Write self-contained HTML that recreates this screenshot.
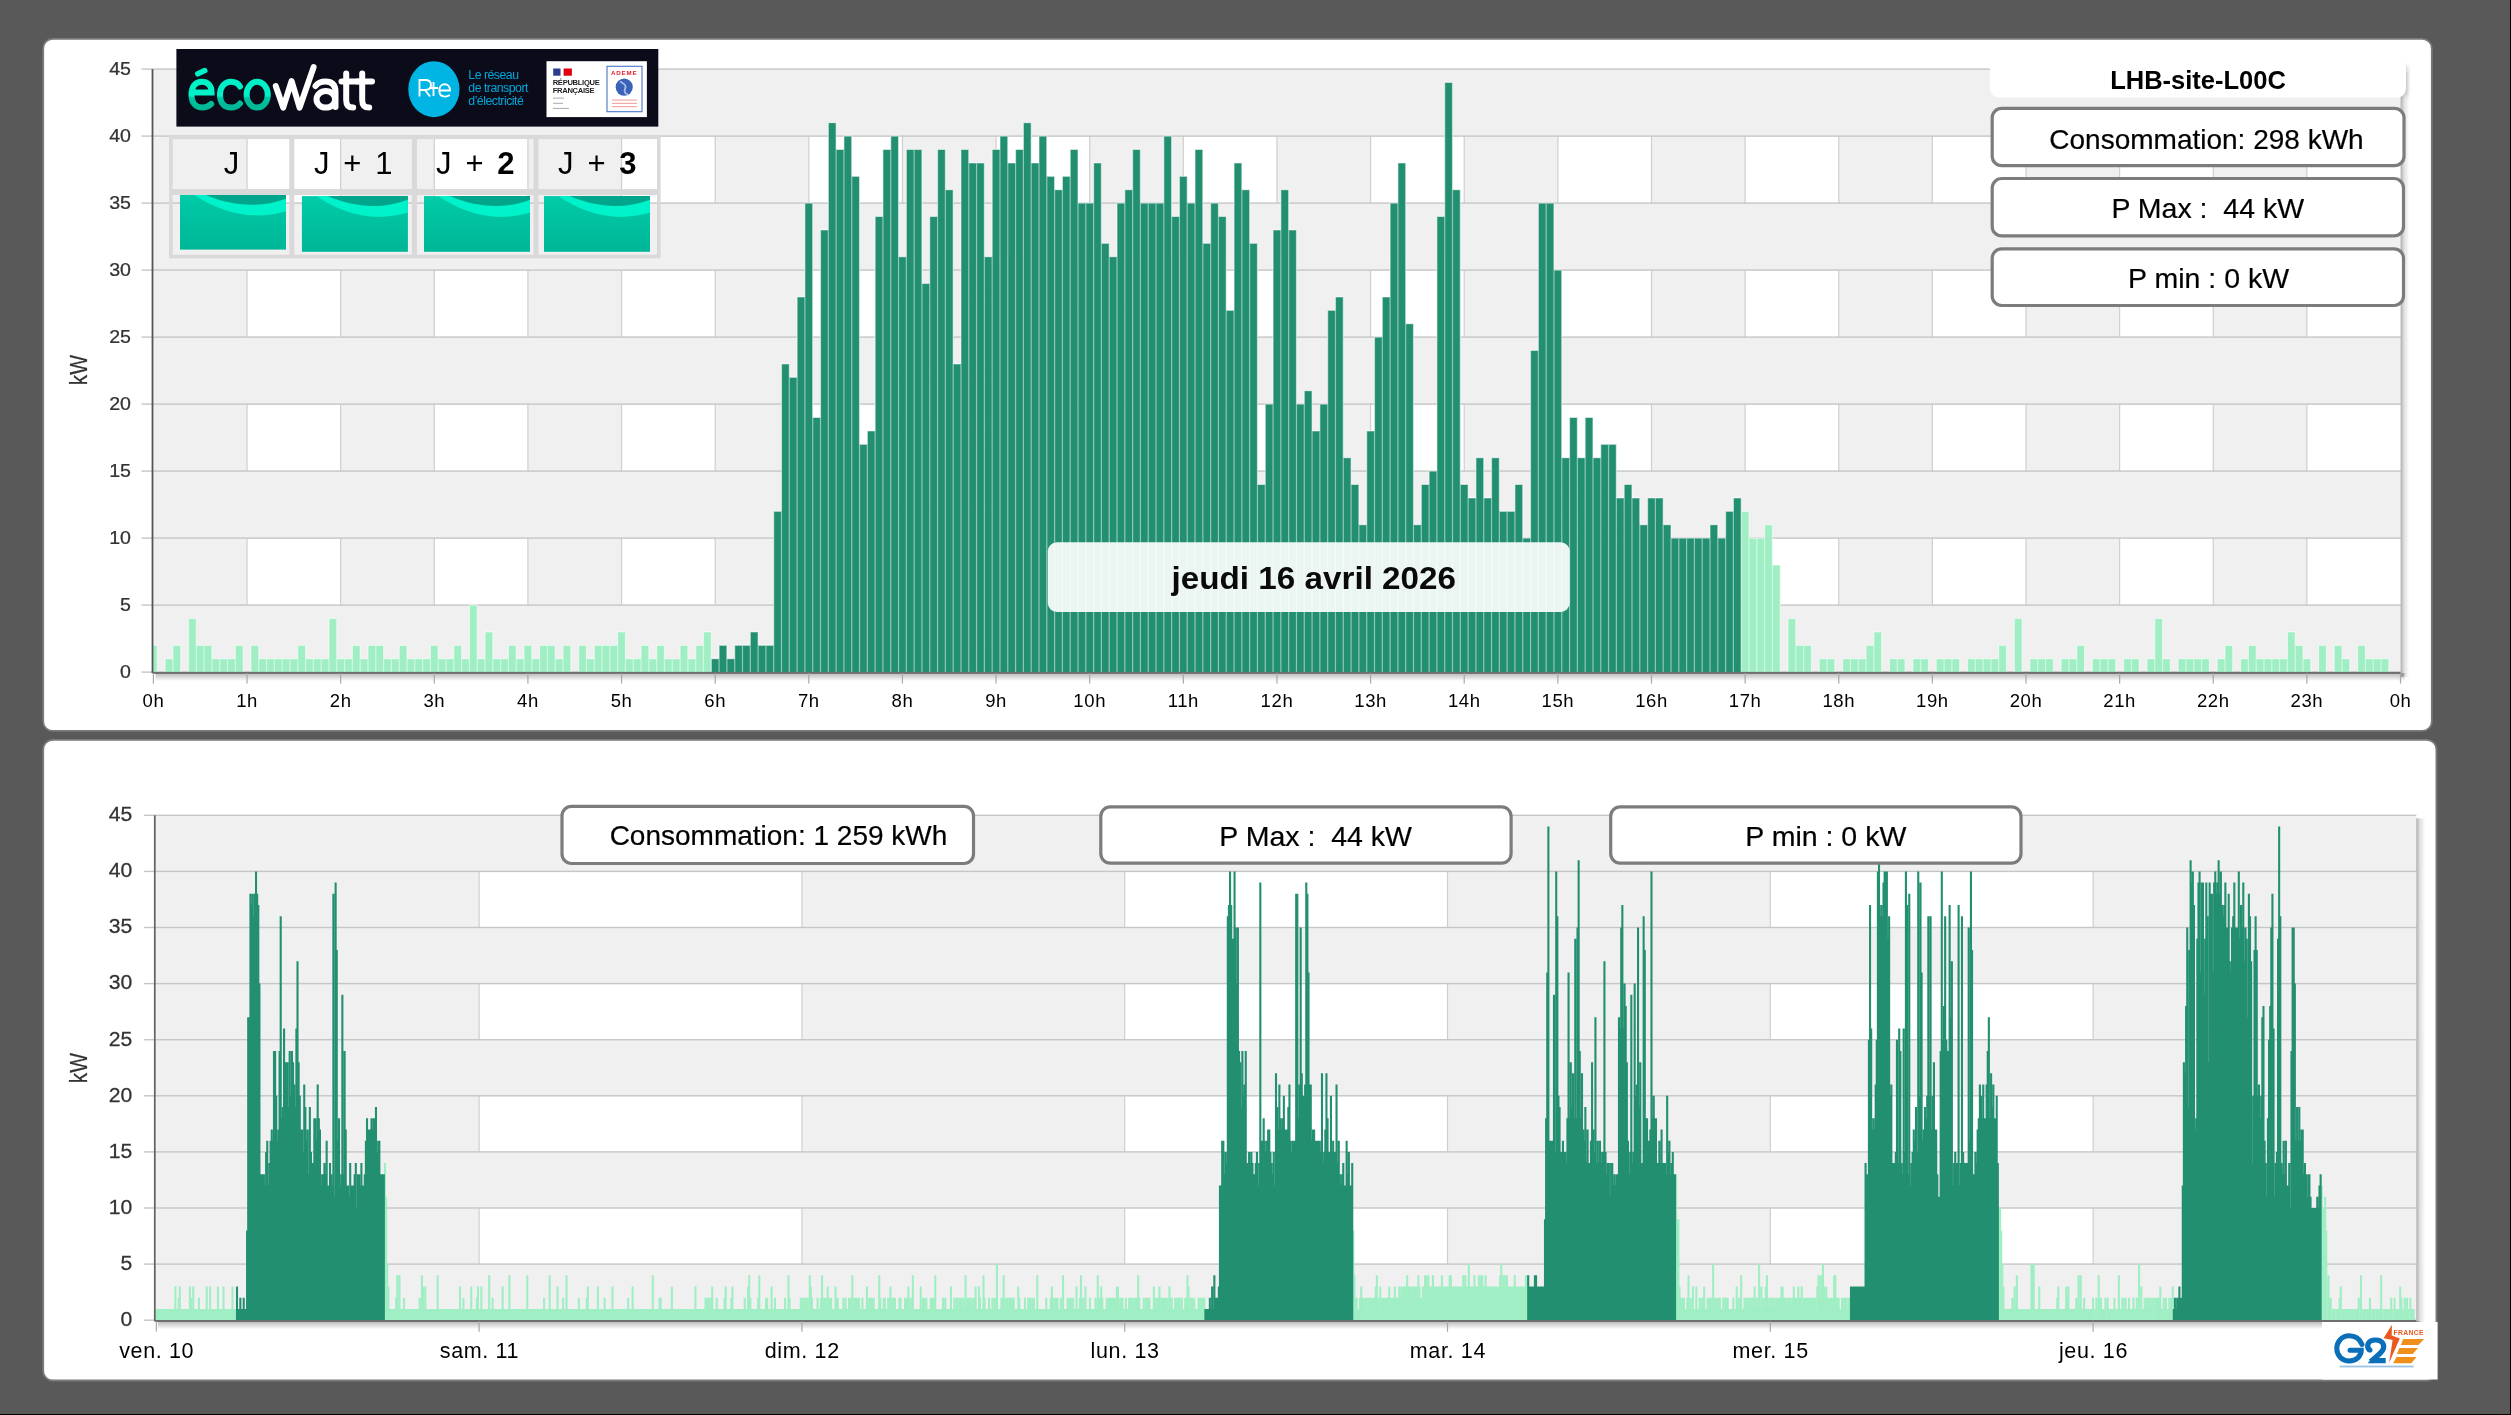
<!DOCTYPE html><html><head><meta charset="utf-8"><style>html,body{margin:0;padding:0;background:#595959;overflow:hidden}svg text{font-family:"Liberation Sans",sans-serif} svg{will-change:transform}</style></head><body><svg width="2511" height="1415" viewBox="0 0 2511 1415" style="display:block"><defs><linearGradient id="plotsh" x1="0" y1="0" x2="1" y2="0"><stop offset="0" stop-color="#000" stop-opacity="0.32"/><stop offset="0.4" stop-color="#000" stop-opacity="0.12"/><stop offset="1" stop-color="#000" stop-opacity="0"/></linearGradient><linearGradient id="plotshb" x1="0" y1="0" x2="0" y2="1"><stop offset="0" stop-color="#000" stop-opacity="0.28"/><stop offset="1" stop-color="#000" stop-opacity="0"/></linearGradient><linearGradient id="tile" x1="0" y1="0" x2="0" y2="1"><stop offset="0" stop-color="#00cba8"/><stop offset="1" stop-color="#00b696"/></linearGradient><linearGradient id="ecog" x1="0" y1="0" x2="0" y2="1"><stop offset="0.55" stop-color="#00f0c8"/><stop offset="0.62" stop-color="#00c4a0"/><stop offset="1" stop-color="#00b896"/></linearGradient><filter id="blur2" x="-3" y="-1" width="7" height="3"><feGaussianBlur stdDeviation="2.2"/></filter></defs><rect x="0" y="0" width="2511" height="1415" fill="#595959"/><rect x="2510" y="0" width="1" height="1415" fill="#000"/><rect x="0" y="1414" width="2511" height="1" fill="#000"/><rect x="43.2" y="38.9" width="2388.6" height="692" rx="9.5" fill="#fff" stroke="#7a7a7a" stroke-width="1.8"/><rect x="43.2" y="739.9" width="2393.2" height="640.6" rx="9.5" fill="#fff" stroke="#7a7a7a" stroke-width="1.8"/><rect x="152.5" y="69.1" width="2248.1" height="603" fill="#fff"/><rect x="152.5" y="69.1" width="2248.1" height="67" fill="#f0f0f0"/><rect x="153.4" y="136.1" width="93.63" height="67" fill="#f0f0f0"/><rect x="340.66" y="136.1" width="93.63" height="67" fill="#f0f0f0"/><rect x="527.92" y="136.1" width="93.63" height="67" fill="#f0f0f0"/><rect x="715.18" y="136.1" width="93.63" height="67" fill="#f0f0f0"/><rect x="902.44" y="136.1" width="93.63" height="67" fill="#f0f0f0"/><rect x="1089.7" y="136.1" width="93.63" height="67" fill="#f0f0f0"/><rect x="1276.96" y="136.1" width="93.63" height="67" fill="#f0f0f0"/><rect x="1464.22" y="136.1" width="93.63" height="67" fill="#f0f0f0"/><rect x="1651.48" y="136.1" width="93.63" height="67" fill="#f0f0f0"/><rect x="1838.74" y="136.1" width="93.63" height="67" fill="#f0f0f0"/><rect x="2026" y="136.1" width="93.63" height="67" fill="#f0f0f0"/><rect x="2213.26" y="136.1" width="93.63" height="67" fill="#f0f0f0"/><rect x="246.43" y="136.1" width="1.2" height="67" fill="#cfcfcf"/><rect x="340.06" y="136.1" width="1.2" height="67" fill="#cfcfcf"/><rect x="433.69" y="136.1" width="1.2" height="67" fill="#cfcfcf"/><rect x="527.32" y="136.1" width="1.2" height="67" fill="#cfcfcf"/><rect x="620.95" y="136.1" width="1.2" height="67" fill="#cfcfcf"/><rect x="714.58" y="136.1" width="1.2" height="67" fill="#cfcfcf"/><rect x="808.21" y="136.1" width="1.2" height="67" fill="#cfcfcf"/><rect x="901.84" y="136.1" width="1.2" height="67" fill="#cfcfcf"/><rect x="995.47" y="136.1" width="1.2" height="67" fill="#cfcfcf"/><rect x="1089.1" y="136.1" width="1.2" height="67" fill="#cfcfcf"/><rect x="1182.73" y="136.1" width="1.2" height="67" fill="#cfcfcf"/><rect x="1276.36" y="136.1" width="1.2" height="67" fill="#cfcfcf"/><rect x="1369.99" y="136.1" width="1.2" height="67" fill="#cfcfcf"/><rect x="1463.62" y="136.1" width="1.2" height="67" fill="#cfcfcf"/><rect x="1557.25" y="136.1" width="1.2" height="67" fill="#cfcfcf"/><rect x="1650.88" y="136.1" width="1.2" height="67" fill="#cfcfcf"/><rect x="1744.51" y="136.1" width="1.2" height="67" fill="#cfcfcf"/><rect x="1838.14" y="136.1" width="1.2" height="67" fill="#cfcfcf"/><rect x="1931.77" y="136.1" width="1.2" height="67" fill="#cfcfcf"/><rect x="2025.4" y="136.1" width="1.2" height="67" fill="#cfcfcf"/><rect x="2119.03" y="136.1" width="1.2" height="67" fill="#cfcfcf"/><rect x="2212.66" y="136.1" width="1.2" height="67" fill="#cfcfcf"/><rect x="2306.29" y="136.1" width="1.2" height="67" fill="#cfcfcf"/><rect x="152.5" y="203.1" width="2248.1" height="67" fill="#f0f0f0"/><rect x="153.4" y="270.1" width="93.63" height="67" fill="#f0f0f0"/><rect x="340.66" y="270.1" width="93.63" height="67" fill="#f0f0f0"/><rect x="527.92" y="270.1" width="93.63" height="67" fill="#f0f0f0"/><rect x="715.18" y="270.1" width="93.63" height="67" fill="#f0f0f0"/><rect x="902.44" y="270.1" width="93.63" height="67" fill="#f0f0f0"/><rect x="1089.7" y="270.1" width="93.63" height="67" fill="#f0f0f0"/><rect x="1276.96" y="270.1" width="93.63" height="67" fill="#f0f0f0"/><rect x="1464.22" y="270.1" width="93.63" height="67" fill="#f0f0f0"/><rect x="1651.48" y="270.1" width="93.63" height="67" fill="#f0f0f0"/><rect x="1838.74" y="270.1" width="93.63" height="67" fill="#f0f0f0"/><rect x="2026" y="270.1" width="93.63" height="67" fill="#f0f0f0"/><rect x="2213.26" y="270.1" width="93.63" height="67" fill="#f0f0f0"/><rect x="246.43" y="270.1" width="1.2" height="67" fill="#cfcfcf"/><rect x="340.06" y="270.1" width="1.2" height="67" fill="#cfcfcf"/><rect x="433.69" y="270.1" width="1.2" height="67" fill="#cfcfcf"/><rect x="527.32" y="270.1" width="1.2" height="67" fill="#cfcfcf"/><rect x="620.95" y="270.1" width="1.2" height="67" fill="#cfcfcf"/><rect x="714.58" y="270.1" width="1.2" height="67" fill="#cfcfcf"/><rect x="808.21" y="270.1" width="1.2" height="67" fill="#cfcfcf"/><rect x="901.84" y="270.1" width="1.2" height="67" fill="#cfcfcf"/><rect x="995.47" y="270.1" width="1.2" height="67" fill="#cfcfcf"/><rect x="1089.1" y="270.1" width="1.2" height="67" fill="#cfcfcf"/><rect x="1182.73" y="270.1" width="1.2" height="67" fill="#cfcfcf"/><rect x="1276.36" y="270.1" width="1.2" height="67" fill="#cfcfcf"/><rect x="1369.99" y="270.1" width="1.2" height="67" fill="#cfcfcf"/><rect x="1463.62" y="270.1" width="1.2" height="67" fill="#cfcfcf"/><rect x="1557.25" y="270.1" width="1.2" height="67" fill="#cfcfcf"/><rect x="1650.88" y="270.1" width="1.2" height="67" fill="#cfcfcf"/><rect x="1744.51" y="270.1" width="1.2" height="67" fill="#cfcfcf"/><rect x="1838.14" y="270.1" width="1.2" height="67" fill="#cfcfcf"/><rect x="1931.77" y="270.1" width="1.2" height="67" fill="#cfcfcf"/><rect x="2025.4" y="270.1" width="1.2" height="67" fill="#cfcfcf"/><rect x="2119.03" y="270.1" width="1.2" height="67" fill="#cfcfcf"/><rect x="2212.66" y="270.1" width="1.2" height="67" fill="#cfcfcf"/><rect x="2306.29" y="270.1" width="1.2" height="67" fill="#cfcfcf"/><rect x="152.5" y="337.1" width="2248.1" height="67" fill="#f0f0f0"/><rect x="153.4" y="404.1" width="93.63" height="67" fill="#f0f0f0"/><rect x="340.66" y="404.1" width="93.63" height="67" fill="#f0f0f0"/><rect x="527.92" y="404.1" width="93.63" height="67" fill="#f0f0f0"/><rect x="715.18" y="404.1" width="93.63" height="67" fill="#f0f0f0"/><rect x="902.44" y="404.1" width="93.63" height="67" fill="#f0f0f0"/><rect x="1089.7" y="404.1" width="93.63" height="67" fill="#f0f0f0"/><rect x="1276.96" y="404.1" width="93.63" height="67" fill="#f0f0f0"/><rect x="1464.22" y="404.1" width="93.63" height="67" fill="#f0f0f0"/><rect x="1651.48" y="404.1" width="93.63" height="67" fill="#f0f0f0"/><rect x="1838.74" y="404.1" width="93.63" height="67" fill="#f0f0f0"/><rect x="2026" y="404.1" width="93.63" height="67" fill="#f0f0f0"/><rect x="2213.26" y="404.1" width="93.63" height="67" fill="#f0f0f0"/><rect x="246.43" y="404.1" width="1.2" height="67" fill="#cfcfcf"/><rect x="340.06" y="404.1" width="1.2" height="67" fill="#cfcfcf"/><rect x="433.69" y="404.1" width="1.2" height="67" fill="#cfcfcf"/><rect x="527.32" y="404.1" width="1.2" height="67" fill="#cfcfcf"/><rect x="620.95" y="404.1" width="1.2" height="67" fill="#cfcfcf"/><rect x="714.58" y="404.1" width="1.2" height="67" fill="#cfcfcf"/><rect x="808.21" y="404.1" width="1.2" height="67" fill="#cfcfcf"/><rect x="901.84" y="404.1" width="1.2" height="67" fill="#cfcfcf"/><rect x="995.47" y="404.1" width="1.2" height="67" fill="#cfcfcf"/><rect x="1089.1" y="404.1" width="1.2" height="67" fill="#cfcfcf"/><rect x="1182.73" y="404.1" width="1.2" height="67" fill="#cfcfcf"/><rect x="1276.36" y="404.1" width="1.2" height="67" fill="#cfcfcf"/><rect x="1369.99" y="404.1" width="1.2" height="67" fill="#cfcfcf"/><rect x="1463.62" y="404.1" width="1.2" height="67" fill="#cfcfcf"/><rect x="1557.25" y="404.1" width="1.2" height="67" fill="#cfcfcf"/><rect x="1650.88" y="404.1" width="1.2" height="67" fill="#cfcfcf"/><rect x="1744.51" y="404.1" width="1.2" height="67" fill="#cfcfcf"/><rect x="1838.14" y="404.1" width="1.2" height="67" fill="#cfcfcf"/><rect x="1931.77" y="404.1" width="1.2" height="67" fill="#cfcfcf"/><rect x="2025.4" y="404.1" width="1.2" height="67" fill="#cfcfcf"/><rect x="2119.03" y="404.1" width="1.2" height="67" fill="#cfcfcf"/><rect x="2212.66" y="404.1" width="1.2" height="67" fill="#cfcfcf"/><rect x="2306.29" y="404.1" width="1.2" height="67" fill="#cfcfcf"/><rect x="152.5" y="471.1" width="2248.1" height="67" fill="#f0f0f0"/><rect x="153.4" y="538.1" width="93.63" height="67" fill="#f0f0f0"/><rect x="340.66" y="538.1" width="93.63" height="67" fill="#f0f0f0"/><rect x="527.92" y="538.1" width="93.63" height="67" fill="#f0f0f0"/><rect x="715.18" y="538.1" width="93.63" height="67" fill="#f0f0f0"/><rect x="902.44" y="538.1" width="93.63" height="67" fill="#f0f0f0"/><rect x="1089.7" y="538.1" width="93.63" height="67" fill="#f0f0f0"/><rect x="1276.96" y="538.1" width="93.63" height="67" fill="#f0f0f0"/><rect x="1464.22" y="538.1" width="93.63" height="67" fill="#f0f0f0"/><rect x="1651.48" y="538.1" width="93.63" height="67" fill="#f0f0f0"/><rect x="1838.74" y="538.1" width="93.63" height="67" fill="#f0f0f0"/><rect x="2026" y="538.1" width="93.63" height="67" fill="#f0f0f0"/><rect x="2213.26" y="538.1" width="93.63" height="67" fill="#f0f0f0"/><rect x="246.43" y="538.1" width="1.2" height="67" fill="#cfcfcf"/><rect x="340.06" y="538.1" width="1.2" height="67" fill="#cfcfcf"/><rect x="433.69" y="538.1" width="1.2" height="67" fill="#cfcfcf"/><rect x="527.32" y="538.1" width="1.2" height="67" fill="#cfcfcf"/><rect x="620.95" y="538.1" width="1.2" height="67" fill="#cfcfcf"/><rect x="714.58" y="538.1" width="1.2" height="67" fill="#cfcfcf"/><rect x="808.21" y="538.1" width="1.2" height="67" fill="#cfcfcf"/><rect x="901.84" y="538.1" width="1.2" height="67" fill="#cfcfcf"/><rect x="995.47" y="538.1" width="1.2" height="67" fill="#cfcfcf"/><rect x="1089.1" y="538.1" width="1.2" height="67" fill="#cfcfcf"/><rect x="1182.73" y="538.1" width="1.2" height="67" fill="#cfcfcf"/><rect x="1276.36" y="538.1" width="1.2" height="67" fill="#cfcfcf"/><rect x="1369.99" y="538.1" width="1.2" height="67" fill="#cfcfcf"/><rect x="1463.62" y="538.1" width="1.2" height="67" fill="#cfcfcf"/><rect x="1557.25" y="538.1" width="1.2" height="67" fill="#cfcfcf"/><rect x="1650.88" y="538.1" width="1.2" height="67" fill="#cfcfcf"/><rect x="1744.51" y="538.1" width="1.2" height="67" fill="#cfcfcf"/><rect x="1838.14" y="538.1" width="1.2" height="67" fill="#cfcfcf"/><rect x="1931.77" y="538.1" width="1.2" height="67" fill="#cfcfcf"/><rect x="2025.4" y="538.1" width="1.2" height="67" fill="#cfcfcf"/><rect x="2119.03" y="538.1" width="1.2" height="67" fill="#cfcfcf"/><rect x="2212.66" y="538.1" width="1.2" height="67" fill="#cfcfcf"/><rect x="2306.29" y="538.1" width="1.2" height="67" fill="#cfcfcf"/><rect x="152.5" y="605.1" width="2248.1" height="67" fill="#f0f0f0"/><rect x="141.5" y="68.4" width="2259.1" height="1.4" fill="#c6c6c6"/><rect x="141.5" y="135.4" width="2259.1" height="1.4" fill="#c6c6c6"/><rect x="141.5" y="202.4" width="2259.1" height="1.4" fill="#c6c6c6"/><rect x="141.5" y="269.4" width="2259.1" height="1.4" fill="#c6c6c6"/><rect x="141.5" y="336.4" width="2259.1" height="1.4" fill="#c6c6c6"/><rect x="141.5" y="403.4" width="2259.1" height="1.4" fill="#c6c6c6"/><rect x="141.5" y="470.4" width="2259.1" height="1.4" fill="#c6c6c6"/><rect x="141.5" y="537.4" width="2259.1" height="1.4" fill="#c6c6c6"/><rect x="141.5" y="604.4" width="2259.1" height="1.4" fill="#c6c6c6"/><rect x="141.5" y="671.4" width="2259.1" height="1.4" fill="#c6c6c6"/><rect x="2400.6" y="72.1" width="9" height="605" fill="url(#plotsh)"/><rect x="155.5" y="673.1" width="2249.1" height="8" fill="url(#plotshb)"/><clipPath id="ctop"><rect x="152.5" y="69.1" width="2248.1" height="603"/></clipPath><g clip-path="url(#ctop)"><path d="M149.5 673.1h7.8v-27.8h-7.8zM165.1 673.1h7.8v-14.4h-7.8zM172.91 673.1h7.8v-27.8h-7.8zM188.51 673.1h7.8v-54.6h-7.8zM196.31 673.1h7.8v-27.8h-7.8zM204.12 673.1h7.8v-27.8h-7.8zM211.92 673.1h7.8v-14.4h-7.8zM219.72 673.1h7.8v-14.4h-7.8zM227.52 673.1h7.8v-14.4h-7.8zM235.33 673.1h7.8v-27.8h-7.8zM250.93 673.1h7.8v-27.8h-7.8zM258.73 673.1h7.8v-14.4h-7.8zM266.54 673.1h7.8v-14.4h-7.8zM274.34 673.1h7.8v-14.4h-7.8zM282.14 673.1h7.8v-14.4h-7.8zM289.94 673.1h7.8v-14.4h-7.8zM297.75 673.1h7.8v-27.8h-7.8zM305.55 673.1h7.8v-14.4h-7.8zM313.35 673.1h7.8v-14.4h-7.8zM321.15 673.1h7.8v-14.4h-7.8zM328.96 673.1h7.8v-54.6h-7.8zM336.76 673.1h7.8v-14.4h-7.8zM344.56 673.1h7.8v-14.4h-7.8zM352.36 673.1h7.8v-27.8h-7.8zM360.17 673.1h7.8v-14.4h-7.8zM367.97 673.1h7.8v-27.8h-7.8zM375.77 673.1h7.8v-27.8h-7.8zM383.57 673.1h7.8v-14.4h-7.8zM391.38 673.1h7.8v-14.4h-7.8zM399.18 673.1h7.8v-27.8h-7.8zM406.98 673.1h7.8v-14.4h-7.8zM414.78 673.1h7.8v-14.4h-7.8zM422.59 673.1h7.8v-14.4h-7.8zM430.39 673.1h7.8v-27.8h-7.8zM438.19 673.1h7.8v-14.4h-7.8zM445.99 673.1h7.8v-14.4h-7.8zM453.8 673.1h7.8v-27.8h-7.8zM461.6 673.1h7.8v-14.4h-7.8zM469.4 673.1h7.8v-68h-7.8zM477.2 673.1h7.8v-14.4h-7.8zM485.01 673.1h7.8v-41.2h-7.8zM492.81 673.1h7.8v-14.4h-7.8zM500.61 673.1h7.8v-14.4h-7.8zM508.41 673.1h7.8v-27.8h-7.8zM516.22 673.1h7.8v-14.4h-7.8zM524.02 673.1h7.8v-27.8h-7.8zM531.82 673.1h7.8v-14.4h-7.8zM539.62 673.1h7.8v-27.8h-7.8zM547.43 673.1h7.8v-27.8h-7.8zM555.23 673.1h7.8v-14.4h-7.8zM563.03 673.1h7.8v-27.8h-7.8zM578.64 673.1h7.8v-27.8h-7.8zM586.44 673.1h7.8v-14.4h-7.8zM594.24 673.1h7.8v-27.8h-7.8zM602.04 673.1h7.8v-27.8h-7.8zM609.85 673.1h7.8v-27.8h-7.8zM617.65 673.1h7.8v-41.2h-7.8zM625.45 673.1h7.8v-14.4h-7.8zM633.25 673.1h7.8v-14.4h-7.8zM641.06 673.1h7.8v-27.8h-7.8zM648.86 673.1h7.8v-14.4h-7.8zM656.66 673.1h7.8v-27.8h-7.8zM664.46 673.1h7.8v-14.4h-7.8zM672.27 673.1h7.8v-14.4h-7.8zM680.07 673.1h7.8v-27.8h-7.8zM687.87 673.1h7.8v-14.4h-7.8zM695.67 673.1h7.8v-27.8h-7.8zM703.48 673.1h7.8v-41.2h-7.8zM1741.21 673.1h7.8v-161.8h-7.8zM1749.01 673.1h7.8v-135h-7.8zM1756.81 673.1h7.8v-135h-7.8zM1764.62 673.1h7.8v-148.4h-7.8zM1772.42 673.1h7.8v-108.2h-7.8zM1788.02 673.1h7.8v-54.6h-7.8zM1795.83 673.1h7.8v-27.8h-7.8zM1803.63 673.1h7.8v-27.8h-7.8zM1819.23 673.1h7.8v-14.4h-7.8zM1827.04 673.1h7.8v-14.4h-7.8zM1842.64 673.1h7.8v-14.4h-7.8zM1850.44 673.1h7.8v-14.4h-7.8zM1858.25 673.1h7.8v-14.4h-7.8zM1866.05 673.1h7.8v-27.8h-7.8zM1873.85 673.1h7.8v-41.2h-7.8zM1889.46 673.1h7.8v-14.4h-7.8zM1897.26 673.1h7.8v-14.4h-7.8zM1912.86 673.1h7.8v-14.4h-7.8zM1920.67 673.1h7.8v-14.4h-7.8zM1936.27 673.1h7.8v-14.4h-7.8zM1944.07 673.1h7.8v-14.4h-7.8zM1951.88 673.1h7.8v-14.4h-7.8zM1967.48 673.1h7.8v-14.4h-7.8zM1975.28 673.1h7.8v-14.4h-7.8zM1983.09 673.1h7.8v-14.4h-7.8zM1990.89 673.1h7.8v-14.4h-7.8zM1998.69 673.1h7.8v-27.8h-7.8zM2014.3 673.1h7.8v-54.6h-7.8zM2029.9 673.1h7.8v-14.4h-7.8zM2037.7 673.1h7.8v-14.4h-7.8zM2045.51 673.1h7.8v-14.4h-7.8zM2061.11 673.1h7.8v-14.4h-7.8zM2068.91 673.1h7.8v-14.4h-7.8zM2076.72 673.1h7.8v-27.8h-7.8zM2092.32 673.1h7.8v-14.4h-7.8zM2100.12 673.1h7.8v-14.4h-7.8zM2107.93 673.1h7.8v-14.4h-7.8zM2123.53 673.1h7.8v-14.4h-7.8zM2131.33 673.1h7.8v-14.4h-7.8zM2146.94 673.1h7.8v-14.4h-7.8zM2154.74 673.1h7.8v-54.6h-7.8zM2162.54 673.1h7.8v-14.4h-7.8zM2178.15 673.1h7.8v-14.4h-7.8zM2185.95 673.1h7.8v-14.4h-7.8zM2193.75 673.1h7.8v-14.4h-7.8zM2201.56 673.1h7.8v-14.4h-7.8zM2217.16 673.1h7.8v-14.4h-7.8zM2224.96 673.1h7.8v-27.8h-7.8zM2240.57 673.1h7.8v-14.4h-7.8zM2248.37 673.1h7.8v-27.8h-7.8zM2256.17 673.1h7.8v-14.4h-7.8zM2263.98 673.1h7.8v-14.4h-7.8zM2271.78 673.1h7.8v-14.4h-7.8zM2279.58 673.1h7.8v-14.4h-7.8zM2287.38 673.1h7.8v-41.2h-7.8zM2295.19 673.1h7.8v-27.8h-7.8zM2302.99 673.1h7.8v-14.4h-7.8zM2318.59 673.1h7.8v-27.8h-7.8zM2334.2 673.1h7.8v-27.8h-7.8zM2342 673.1h7.8v-14.4h-7.8zM2357.61 673.1h7.8v-27.8h-7.8zM2365.41 673.1h7.8v-14.4h-7.8zM2373.21 673.1h7.8v-14.4h-7.8zM2381.01 673.1h7.8v-14.4h-7.8z" fill="#a0eec4" stroke="#fff" stroke-opacity="0.5" stroke-width="1.2"/><path d="M711.28 673.1h7.8v-14.4h-7.8zM719.08 673.1h7.8v-27.8h-7.8zM726.88 673.1h7.8v-14.4h-7.8zM734.69 673.1h7.8v-27.8h-7.8zM742.49 673.1h7.8v-27.8h-7.8zM750.29 673.1h7.8v-41.2h-7.8zM758.09 673.1h7.8v-27.8h-7.8zM765.9 673.1h7.8v-27.8h-7.8zM773.7 673.1h7.8v-161.8h-7.8zM781.5 673.1h7.8v-309.2h-7.8zM789.3 673.1h7.8v-295.8h-7.8zM797.11 673.1h7.8v-376.2h-7.8zM804.91 673.1h7.8v-470h-7.8zM812.71 673.1h7.8v-255.6h-7.8zM820.51 673.1h7.8v-443.2h-7.8zM828.32 673.1h7.8v-550.4h-7.8zM836.12 673.1h7.8v-523.6h-7.8zM843.92 673.1h7.8v-537h-7.8zM851.72 673.1h7.8v-496.8h-7.8zM859.53 673.1h7.8v-228.8h-7.8zM867.33 673.1h7.8v-242.2h-7.8zM875.13 673.1h7.8v-456.6h-7.8zM882.93 673.1h7.8v-523.6h-7.8zM890.74 673.1h7.8v-537h-7.8zM898.54 673.1h7.8v-416.4h-7.8zM906.34 673.1h7.8v-523.6h-7.8zM914.14 673.1h7.8v-523.6h-7.8zM921.95 673.1h7.8v-389.6h-7.8zM929.75 673.1h7.8v-456.6h-7.8zM937.55 673.1h7.8v-523.6h-7.8zM945.35 673.1h7.8v-483.4h-7.8zM953.16 673.1h7.8v-309.2h-7.8zM960.96 673.1h7.8v-523.6h-7.8zM968.76 673.1h7.8v-510.2h-7.8zM976.56 673.1h7.8v-510.2h-7.8zM984.37 673.1h7.8v-416.4h-7.8zM992.17 673.1h7.8v-523.6h-7.8zM999.97 673.1h7.8v-537h-7.8zM1007.77 673.1h7.8v-510.2h-7.8zM1015.58 673.1h7.8v-523.6h-7.8zM1023.38 673.1h7.8v-550.4h-7.8zM1031.18 673.1h7.8v-510.2h-7.8zM1038.98 673.1h7.8v-537h-7.8zM1046.79 673.1h7.8v-496.8h-7.8zM1054.59 673.1h7.8v-483.4h-7.8zM1062.39 673.1h7.8v-496.8h-7.8zM1070.19 673.1h7.8v-523.6h-7.8zM1078 673.1h7.8v-470h-7.8zM1085.8 673.1h7.8v-470h-7.8zM1093.6 673.1h7.8v-510.2h-7.8zM1101.4 673.1h7.8v-429.8h-7.8zM1109.21 673.1h7.8v-416.4h-7.8zM1117.01 673.1h7.8v-470h-7.8zM1124.81 673.1h7.8v-483.4h-7.8zM1132.61 673.1h7.8v-523.6h-7.8zM1140.42 673.1h7.8v-470h-7.8zM1148.22 673.1h7.8v-470h-7.8zM1156.02 673.1h7.8v-470h-7.8zM1163.82 673.1h7.8v-537h-7.8zM1171.63 673.1h7.8v-456.6h-7.8zM1179.43 673.1h7.8v-496.8h-7.8zM1187.23 673.1h7.8v-470h-7.8zM1195.03 673.1h7.8v-523.6h-7.8zM1202.84 673.1h7.8v-429.8h-7.8zM1210.64 673.1h7.8v-470h-7.8zM1218.44 673.1h7.8v-456.6h-7.8zM1226.24 673.1h7.8v-362.8h-7.8zM1234.05 673.1h7.8v-510.2h-7.8zM1241.85 673.1h7.8v-483.4h-7.8zM1249.65 673.1h7.8v-429.8h-7.8zM1257.45 673.1h7.8v-188.6h-7.8zM1265.26 673.1h7.8v-269h-7.8zM1273.06 673.1h7.8v-443.2h-7.8zM1280.86 673.1h7.8v-483.4h-7.8zM1288.66 673.1h7.8v-443.2h-7.8zM1296.47 673.1h7.8v-269h-7.8zM1304.27 673.1h7.8v-282.4h-7.8zM1312.07 673.1h7.8v-242.2h-7.8zM1319.87 673.1h7.8v-269h-7.8zM1327.68 673.1h7.8v-362.8h-7.8zM1335.48 673.1h7.8v-376.2h-7.8zM1343.28 673.1h7.8v-215.4h-7.8zM1351.08 673.1h7.8v-188.6h-7.8zM1358.89 673.1h7.8v-148.4h-7.8zM1366.69 673.1h7.8v-242.2h-7.8zM1374.49 673.1h7.8v-336h-7.8zM1382.29 673.1h7.8v-376.2h-7.8zM1390.1 673.1h7.8v-470h-7.8zM1397.9 673.1h7.8v-510.2h-7.8zM1405.7 673.1h7.8v-349.4h-7.8zM1413.5 673.1h7.8v-148.4h-7.8zM1421.31 673.1h7.8v-188.6h-7.8zM1429.11 673.1h7.8v-202h-7.8zM1436.91 673.1h7.8v-456.6h-7.8zM1444.71 673.1h7.8v-590.6h-7.8zM1452.52 673.1h7.8v-483.4h-7.8zM1460.32 673.1h7.8v-188.6h-7.8zM1468.12 673.1h7.8v-175.2h-7.8zM1475.92 673.1h7.8v-215.4h-7.8zM1483.73 673.1h7.8v-175.2h-7.8zM1491.53 673.1h7.8v-215.4h-7.8zM1499.33 673.1h7.8v-161.8h-7.8zM1507.13 673.1h7.8v-161.8h-7.8zM1514.94 673.1h7.8v-188.6h-7.8zM1522.74 673.1h7.8v-135h-7.8zM1530.54 673.1h7.8v-322.6h-7.8zM1538.34 673.1h7.8v-470h-7.8zM1546.15 673.1h7.8v-470h-7.8zM1553.95 673.1h7.8v-403h-7.8zM1561.75 673.1h7.8v-215.4h-7.8zM1569.55 673.1h7.8v-255.6h-7.8zM1577.36 673.1h7.8v-215.4h-7.8zM1585.16 673.1h7.8v-255.6h-7.8zM1592.96 673.1h7.8v-215.4h-7.8zM1600.76 673.1h7.8v-228.8h-7.8zM1608.57 673.1h7.8v-228.8h-7.8zM1616.37 673.1h7.8v-175.2h-7.8zM1624.17 673.1h7.8v-188.6h-7.8zM1631.97 673.1h7.8v-175.2h-7.8zM1639.78 673.1h7.8v-148.4h-7.8zM1647.58 673.1h7.8v-175.2h-7.8zM1655.38 673.1h7.8v-175.2h-7.8zM1663.18 673.1h7.8v-148.4h-7.8zM1670.99 673.1h7.8v-135h-7.8zM1678.79 673.1h7.8v-135h-7.8zM1686.59 673.1h7.8v-135h-7.8zM1694.39 673.1h7.8v-135h-7.8zM1702.2 673.1h7.8v-135h-7.8zM1710 673.1h7.8v-148.4h-7.8zM1717.8 673.1h7.8v-135h-7.8zM1725.6 673.1h7.8v-161.8h-7.8zM1733.41 673.1h7.8v-175.2h-7.8z" fill="#228f70" stroke="#fff" stroke-opacity="0.5" stroke-width="1.2"/></g><rect x="151.6" y="69.1" width="1.8" height="604" fill="#555"/><rect x="152.5" y="671.9" width="2248.1" height="2" fill="#6e6e6e"/><rect x="152.8" y="673.1" width="1.2" height="10.5" fill="#a8a8a8"/><rect x="246.43" y="673.1" width="1.2" height="10.5" fill="#a8a8a8"/><rect x="340.06" y="673.1" width="1.2" height="10.5" fill="#a8a8a8"/><rect x="433.69" y="673.1" width="1.2" height="10.5" fill="#a8a8a8"/><rect x="527.32" y="673.1" width="1.2" height="10.5" fill="#a8a8a8"/><rect x="620.95" y="673.1" width="1.2" height="10.5" fill="#a8a8a8"/><rect x="714.58" y="673.1" width="1.2" height="10.5" fill="#a8a8a8"/><rect x="808.21" y="673.1" width="1.2" height="10.5" fill="#a8a8a8"/><rect x="901.84" y="673.1" width="1.2" height="10.5" fill="#a8a8a8"/><rect x="995.47" y="673.1" width="1.2" height="10.5" fill="#a8a8a8"/><rect x="1089.1" y="673.1" width="1.2" height="10.5" fill="#a8a8a8"/><rect x="1182.73" y="673.1" width="1.2" height="10.5" fill="#a8a8a8"/><rect x="1276.36" y="673.1" width="1.2" height="10.5" fill="#a8a8a8"/><rect x="1369.99" y="673.1" width="1.2" height="10.5" fill="#a8a8a8"/><rect x="1463.62" y="673.1" width="1.2" height="10.5" fill="#a8a8a8"/><rect x="1557.25" y="673.1" width="1.2" height="10.5" fill="#a8a8a8"/><rect x="1650.88" y="673.1" width="1.2" height="10.5" fill="#a8a8a8"/><rect x="1744.51" y="673.1" width="1.2" height="10.5" fill="#a8a8a8"/><rect x="1838.14" y="673.1" width="1.2" height="10.5" fill="#a8a8a8"/><rect x="1931.77" y="673.1" width="1.2" height="10.5" fill="#a8a8a8"/><rect x="2025.4" y="673.1" width="1.2" height="10.5" fill="#a8a8a8"/><rect x="2119.03" y="673.1" width="1.2" height="10.5" fill="#a8a8a8"/><rect x="2212.66" y="673.1" width="1.2" height="10.5" fill="#a8a8a8"/><rect x="2306.29" y="673.1" width="1.2" height="10.5" fill="#a8a8a8"/><rect x="2399.92" y="673.1" width="1.2" height="10.5" fill="#a8a8a8"/><text transform="translate(131 678.4) scale(1.12 1)" text-anchor="end" font-size="17.5" fill="#333" stroke="#333" stroke-width="0.25">0</text><text transform="translate(131 611.4) scale(1.12 1)" text-anchor="end" font-size="17.5" fill="#333" stroke="#333" stroke-width="0.25">5</text><text transform="translate(131 544.4) scale(1.12 1)" text-anchor="end" font-size="17.5" fill="#333" stroke="#333" stroke-width="0.25">10</text><text transform="translate(131 477.4) scale(1.12 1)" text-anchor="end" font-size="17.5" fill="#333" stroke="#333" stroke-width="0.25">15</text><text transform="translate(131 410.4) scale(1.12 1)" text-anchor="end" font-size="17.5" fill="#333" stroke="#333" stroke-width="0.25">20</text><text transform="translate(131 343.4) scale(1.12 1)" text-anchor="end" font-size="17.5" fill="#333" stroke="#333" stroke-width="0.25">25</text><text transform="translate(131 276.4) scale(1.12 1)" text-anchor="end" font-size="17.5" fill="#333" stroke="#333" stroke-width="0.25">30</text><text transform="translate(131 209.4) scale(1.12 1)" text-anchor="end" font-size="17.5" fill="#333" stroke="#333" stroke-width="0.25">35</text><text transform="translate(131 142.4) scale(1.12 1)" text-anchor="end" font-size="17.5" fill="#333" stroke="#333" stroke-width="0.25">40</text><text transform="translate(131 75.4) scale(1.12 1)" text-anchor="end" font-size="17.5" fill="#333" stroke="#333" stroke-width="0.25">45</text><text transform="translate(86.5 370) rotate(-90) scale(1 1.12)" text-anchor="middle" font-size="21" fill="#333" stroke="#333" stroke-width="0.2">kW</text><text x="153.4" y="707" text-anchor="middle" font-size="18.5" fill="#000" letter-spacing="0.6">0h</text><text x="247.03" y="707" text-anchor="middle" font-size="18.5" fill="#000" letter-spacing="0.6">1h</text><text x="340.66" y="707" text-anchor="middle" font-size="18.5" fill="#000" letter-spacing="0.6">2h</text><text x="434.29" y="707" text-anchor="middle" font-size="18.5" fill="#000" letter-spacing="0.6">3h</text><text x="527.92" y="707" text-anchor="middle" font-size="18.5" fill="#000" letter-spacing="0.6">4h</text><text x="621.55" y="707" text-anchor="middle" font-size="18.5" fill="#000" letter-spacing="0.6">5h</text><text x="715.18" y="707" text-anchor="middle" font-size="18.5" fill="#000" letter-spacing="0.6">6h</text><text x="808.81" y="707" text-anchor="middle" font-size="18.5" fill="#000" letter-spacing="0.6">7h</text><text x="902.44" y="707" text-anchor="middle" font-size="18.5" fill="#000" letter-spacing="0.6">8h</text><text x="996.07" y="707" text-anchor="middle" font-size="18.5" fill="#000" letter-spacing="0.6">9h</text><text x="1089.7" y="707" text-anchor="middle" font-size="18.5" fill="#000" letter-spacing="0.6">10h</text><text x="1183.33" y="707" text-anchor="middle" font-size="18.5" fill="#000" letter-spacing="0.6">11h</text><text x="1276.96" y="707" text-anchor="middle" font-size="18.5" fill="#000" letter-spacing="0.6">12h</text><text x="1370.59" y="707" text-anchor="middle" font-size="18.5" fill="#000" letter-spacing="0.6">13h</text><text x="1464.22" y="707" text-anchor="middle" font-size="18.5" fill="#000" letter-spacing="0.6">14h</text><text x="1557.85" y="707" text-anchor="middle" font-size="18.5" fill="#000" letter-spacing="0.6">15h</text><text x="1651.48" y="707" text-anchor="middle" font-size="18.5" fill="#000" letter-spacing="0.6">16h</text><text x="1745.11" y="707" text-anchor="middle" font-size="18.5" fill="#000" letter-spacing="0.6">17h</text><text x="1838.74" y="707" text-anchor="middle" font-size="18.5" fill="#000" letter-spacing="0.6">18h</text><text x="1932.37" y="707" text-anchor="middle" font-size="18.5" fill="#000" letter-spacing="0.6">19h</text><text x="2026" y="707" text-anchor="middle" font-size="18.5" fill="#000" letter-spacing="0.6">20h</text><text x="2119.63" y="707" text-anchor="middle" font-size="18.5" fill="#000" letter-spacing="0.6">21h</text><text x="2213.26" y="707" text-anchor="middle" font-size="18.5" fill="#000" letter-spacing="0.6">22h</text><text x="2306.89" y="707" text-anchor="middle" font-size="18.5" fill="#000" letter-spacing="0.6">23h</text><text x="2400.52" y="707" text-anchor="middle" font-size="18.5" fill="#000" letter-spacing="0.6">0h</text><rect x="1047.8" y="542.3" width="521.9" height="69.7" rx="9" fill="#fff" fill-opacity="0.91"/><text transform="translate(1313.8 589.2) scale(1.09 1)" text-anchor="middle" font-size="30.5" font-weight="bold" fill="#0a0a0a">jeudi 16 avril 2026</text><rect x="2403.5" y="66" width="4" height="30" fill="#000" opacity="0.22" filter="url(#blur2)"/><rect x="1990" y="60" width="416" height="37.6" rx="9" fill="#fff"/><text x="2198" y="89.3" text-anchor="middle" font-size="25.5" font-weight="bold" fill="#000">LHB-site-L00C</text><rect x="1992.2" y="108.3" width="411.8" height="57.4" rx="9.5" fill="#fff" stroke="#7c7c7c" stroke-width="3.2"/><text x="2206.5" y="148.5" text-anchor="middle" font-size="28" fill="#000" stroke="#000" stroke-width="0.2" xml:space="preserve">Consommation: 298 kWh</text><rect x="1992.2" y="178.5" width="411.3" height="57.4" rx="9.5" fill="#fff" stroke="#7c7c7c" stroke-width="3.2"/><text x="2207.8" y="217.8" text-anchor="middle" font-size="28.5" fill="#000" stroke="#000" stroke-width="0.2" xml:space="preserve">P Max :  44 kW</text><rect x="1992.2" y="248.8" width="411.3" height="56.7" rx="9.5" fill="#fff" stroke="#7c7c7c" stroke-width="3.2"/><text x="2208.6" y="288" text-anchor="middle" font-size="28.5" fill="#000" stroke="#000" stroke-width="0.2" xml:space="preserve">P min : 0 kW</text><rect x="176.4" y="49" width="481.9" height="77.6" fill="#0b0b19"/><g fill="none" stroke="url(#ecog)" stroke-width="6" stroke-linecap="round"><path d="M191.5 92.5 H211.6 C211.6 85 207.5 81.8 201.8 81.8 C195 81.8 191.5 87 191.5 95 C191.5 103.5 196.5 107.6 202.2 107.6 C206 107.6 209 106 211.2 104"/><path d="M240 86.5 C238 83 234.5 81.8 230.8 81.8 C224.5 81.8 220 87 220 95 C220 103 224.5 107.6 230.8 107.6 C234.5 107.6 238 106 240 103.5"/><ellipse cx="257.2" cy="94.7" rx="10.6" ry="12.9"/></g><path d="M197.8 73.8 L204.8 70.6" stroke="#00f0c8" stroke-width="5.5" stroke-linecap="round"/><g fill="none" stroke="#fff" stroke-width="6" stroke-linecap="round" stroke-linejoin="round"><path d="M275.8 86.2 L283.2 107.6 L291.6 81 L299.6 107.6 L313.6 67.2"/><path d="M315.5 86 C318 82.5 322 81.5 325.5 81.5 C332 81.5 335.5 85 335.5 92 V107"/><ellipse cx="325.8" cy="99.3" rx="9.3" ry="8.3"/><path d="M346.2 73.5 V100 C346.2 105.5 348.5 107.6 353.2 107.6"/><path d="M341.5 81.6 H357.5"/><path d="M362.2 73.5 V100 C362.2 105.5 364.5 107.6 369.2 107.6"/><path d="M357.5 81.6 H372"/></g><ellipse cx="433.9" cy="89.2" rx="25.6" ry="28" fill="#00b4e4"/><g fill="none" stroke="#fff" stroke-width="1.9"><path d="M419.5 96.5 V80 H425 C429 80 431 82.2 431 85 C431 88 429 90 425 90 H419.5 M425 90 L430 96.5"/><path d="M433.5 82 V96 M429.5 88 H438"/><path d="M439.5 90.5 H450 C450 86.5 447.5 84.2 444.8 84.2 C441.2 84.2 439.3 87 439.3 90.5 C439.3 94.2 441.5 96.6 445 96.6 C447 96.6 448.5 96 449.8 95"/></g><g font-size="12.3" fill="#00a7d8" font-family='"Liberation Sans", sans-serif' letter-spacing="-0.5"><text x="468.3" y="79.3">Le réseau</text><text x="468.3" y="92.3">de transport</text><text x="468.3" y="105.2">d’électricité</text></g><rect x="546.5" y="61.2" width="100.4" height="55.9" fill="#fff"/><rect x="553.2" y="68.5" width="7.3" height="7.2" fill="#2a3d8f"/><rect x="563.6" y="68.5" width="8.3" height="7.2" fill="#e1000f"/><text x="552.7" y="85" font-size="7.6" font-weight="bold" fill="#222" letter-spacing="-0.3">RÉPUBLIQUE</text><text x="552.7" y="93.3" font-size="7.6" font-weight="bold" fill="#222" letter-spacing="-0.3">FRANÇAISE</text><g fill="#aaa"><rect x="553" y="97.6" width="11" height="1"/><rect x="553" y="102.8" width="10" height="1"/><rect x="553" y="107.9" width="16" height="1"/></g><rect x="607" y="66.3" width="35" height="45.4" fill="#fff" stroke="#4a72c4" stroke-width="1.1"/><text x="624.2" y="74.8" text-anchor="middle" font-size="6.2" font-weight="bold" fill="#e2202a" letter-spacing="0.8">ADEME</text><circle cx="624.2" cy="87.1" r="8.6" fill="#3a63b8"/><path d="M620 81.5 C623.5 83.5 627 85 625 89 C623.5 92 626 94 628 94.5" stroke="#a8bce8" stroke-width="1.8" fill="none"/><g fill="#f3a0a0"><rect x="612" y="99.5" width="25" height="1.1"/><rect x="612" y="102.8" width="25" height="1.1"/><rect x="612" y="106.1" width="25" height="1.1"/></g><g fill="none" stroke="#d9d9d9"><rect x="170.9" y="137.3" width="487.9" height="119.2" stroke-width="3.6"/><path d="M291.8 137 V257 M414.4 137 V257 M536 137 V257" stroke-width="5"/><path d="M171 192 H659" stroke-width="6"/></g><text x="231.4" y="174" text-anchor="middle" font-size="31" fill="#000">J</text><text x="354.6" y="174" text-anchor="middle" font-size="31" fill="#000" xml:space="preserve" letter-spacing="2.6">J + <tspan>1</tspan></text><text x="476.65" y="174" text-anchor="middle" font-size="31" fill="#000" xml:space="preserve" letter-spacing="2.6">J + <tspan font-weight="bold">2</tspan></text><text x="598.65" y="174" text-anchor="middle" font-size="31" fill="#000" xml:space="preserve" letter-spacing="2.6">J + <tspan font-weight="bold">3</tspan></text><g transform="translate(180 195) scale(1 0.98)"><rect width="106" height="55.7" fill="url(#tile)"/><path d="M14.3 0 C40 17 70 27 106 16.5 V0 Z" fill="#00f2ca"/><path d="M26 0 C48 10 78 14.5 106 3.7 V0 Z" fill="#00a58b"/></g><g transform="translate(301.9 196.1) scale(1 1)"><rect width="106" height="55.7" fill="url(#tile)"/><path d="M14.3 0 C40 17 70 27 106 16.5 V0 Z" fill="#00f2ca"/><path d="M26 0 C48 10 78 14.5 106 3.7 V0 Z" fill="#00a58b"/></g><g transform="translate(424 196.1) scale(1 1)"><rect width="106" height="55.7" fill="url(#tile)"/><path d="M14.3 0 C40 17 70 27 106 16.5 V0 Z" fill="#00f2ca"/><path d="M26 0 C48 10 78 14.5 106 3.7 V0 Z" fill="#00a58b"/></g><g transform="translate(544 196.1) scale(1 1)"><rect width="106" height="55.7" fill="url(#tile)"/><path d="M14.3 0 C40 17 70 27 106 16.5 V0 Z" fill="#00f2ca"/><path d="M26 0 C48 10 78 14.5 106 3.7 V0 Z" fill="#00a58b"/></g><rect x="154.8" y="815.3" width="2261.5" height="504.9" fill="#fff"/><rect x="154.8" y="815.3" width="2261.5" height="56.1" fill="#f0f0f0"/><rect x="156.3" y="871.4" width="322.8" height="56.1" fill="#f0f0f0"/><rect x="801.9" y="871.4" width="322.8" height="56.1" fill="#f0f0f0"/><rect x="1447.5" y="871.4" width="322.8" height="56.1" fill="#f0f0f0"/><rect x="2093.1" y="871.4" width="322.8" height="56.1" fill="#f0f0f0"/><rect x="478.5" y="871.4" width="1.2" height="56.1" fill="#cfcfcf"/><rect x="801.3" y="871.4" width="1.2" height="56.1" fill="#cfcfcf"/><rect x="1124.1" y="871.4" width="1.2" height="56.1" fill="#cfcfcf"/><rect x="1446.9" y="871.4" width="1.2" height="56.1" fill="#cfcfcf"/><rect x="1769.7" y="871.4" width="1.2" height="56.1" fill="#cfcfcf"/><rect x="2092.5" y="871.4" width="1.2" height="56.1" fill="#cfcfcf"/><rect x="154.8" y="927.5" width="2261.5" height="56.1" fill="#f0f0f0"/><rect x="156.3" y="983.6" width="322.8" height="56.1" fill="#f0f0f0"/><rect x="801.9" y="983.6" width="322.8" height="56.1" fill="#f0f0f0"/><rect x="1447.5" y="983.6" width="322.8" height="56.1" fill="#f0f0f0"/><rect x="2093.1" y="983.6" width="322.8" height="56.1" fill="#f0f0f0"/><rect x="478.5" y="983.6" width="1.2" height="56.1" fill="#cfcfcf"/><rect x="801.3" y="983.6" width="1.2" height="56.1" fill="#cfcfcf"/><rect x="1124.1" y="983.6" width="1.2" height="56.1" fill="#cfcfcf"/><rect x="1446.9" y="983.6" width="1.2" height="56.1" fill="#cfcfcf"/><rect x="1769.7" y="983.6" width="1.2" height="56.1" fill="#cfcfcf"/><rect x="2092.5" y="983.6" width="1.2" height="56.1" fill="#cfcfcf"/><rect x="154.8" y="1039.7" width="2261.5" height="56.1" fill="#f0f0f0"/><rect x="156.3" y="1095.8" width="322.8" height="56.1" fill="#f0f0f0"/><rect x="801.9" y="1095.8" width="322.8" height="56.1" fill="#f0f0f0"/><rect x="1447.5" y="1095.8" width="322.8" height="56.1" fill="#f0f0f0"/><rect x="2093.1" y="1095.8" width="322.8" height="56.1" fill="#f0f0f0"/><rect x="478.5" y="1095.8" width="1.2" height="56.1" fill="#cfcfcf"/><rect x="801.3" y="1095.8" width="1.2" height="56.1" fill="#cfcfcf"/><rect x="1124.1" y="1095.8" width="1.2" height="56.1" fill="#cfcfcf"/><rect x="1446.9" y="1095.8" width="1.2" height="56.1" fill="#cfcfcf"/><rect x="1769.7" y="1095.8" width="1.2" height="56.1" fill="#cfcfcf"/><rect x="2092.5" y="1095.8" width="1.2" height="56.1" fill="#cfcfcf"/><rect x="154.8" y="1151.9" width="2261.5" height="56.1" fill="#f0f0f0"/><rect x="156.3" y="1208" width="322.8" height="56.1" fill="#f0f0f0"/><rect x="801.9" y="1208" width="322.8" height="56.1" fill="#f0f0f0"/><rect x="1447.5" y="1208" width="322.8" height="56.1" fill="#f0f0f0"/><rect x="2093.1" y="1208" width="322.8" height="56.1" fill="#f0f0f0"/><rect x="478.5" y="1208" width="1.2" height="56.1" fill="#cfcfcf"/><rect x="801.3" y="1208" width="1.2" height="56.1" fill="#cfcfcf"/><rect x="1124.1" y="1208" width="1.2" height="56.1" fill="#cfcfcf"/><rect x="1446.9" y="1208" width="1.2" height="56.1" fill="#cfcfcf"/><rect x="1769.7" y="1208" width="1.2" height="56.1" fill="#cfcfcf"/><rect x="2092.5" y="1208" width="1.2" height="56.1" fill="#cfcfcf"/><rect x="154.8" y="1264.1" width="2261.5" height="56.1" fill="#f0f0f0"/><rect x="143.8" y="814.6" width="2272.5" height="1.4" fill="#c6c6c6"/><rect x="143.8" y="870.7" width="2272.5" height="1.4" fill="#c6c6c6"/><rect x="143.8" y="926.8" width="2272.5" height="1.4" fill="#c6c6c6"/><rect x="143.8" y="982.9" width="2272.5" height="1.4" fill="#c6c6c6"/><rect x="143.8" y="1039" width="2272.5" height="1.4" fill="#c6c6c6"/><rect x="143.8" y="1095.1" width="2272.5" height="1.4" fill="#c6c6c6"/><rect x="143.8" y="1151.2" width="2272.5" height="1.4" fill="#c6c6c6"/><rect x="143.8" y="1207.3" width="2272.5" height="1.4" fill="#c6c6c6"/><rect x="143.8" y="1263.4" width="2272.5" height="1.4" fill="#c6c6c6"/><rect x="143.8" y="1319.5" width="2272.5" height="1.4" fill="#c6c6c6"/><rect x="2416.3" y="818.3" width="9" height="506.9" fill="url(#plotsh)"/><rect x="157.8" y="1321.2" width="2262.5" height="8" fill="url(#plotshb)"/><clipPath id="cbot"><rect x="154.8" y="815.3" width="2261.5" height="504.9"/></clipPath><g clip-path="url(#cbot)"><path d="M155.25 1320.2h2.1v-11.22h-2.1zM156.37 1320.2h2.1v-11.22h-2.1zM157.49 1320.2h2.1v-11.22h-2.1zM158.61 1320.2h2.1v-11.22h-2.1zM159.73 1320.2h2.1v-11.22h-2.1zM160.85 1320.2h2.1v-11.22h-2.1zM161.97 1320.2h2.1v-11.22h-2.1zM163.1 1320.2h2.1v-11.22h-2.1zM164.22 1320.2h2.1v-11.22h-2.1zM165.34 1320.2h2.1v-11.22h-2.1zM166.46 1320.2h2.1v-11.22h-2.1zM167.58 1320.2h2.1v-11.22h-2.1zM168.7 1320.2h2.1v-11.22h-2.1zM169.82 1320.2h2.1v-11.22h-2.1zM170.94 1320.2h2.1v-11.22h-2.1zM172.06 1320.2h2.1v-11.22h-2.1zM173.18 1320.2h2.1v-11.22h-2.1zM174.3 1320.2h2.1v-33.66h-2.1zM175.43 1320.2h2.1v-11.22h-2.1zM176.55 1320.2h2.1v-11.22h-2.1zM177.67 1320.2h2.1v-22.44h-2.1zM178.79 1320.2h2.1v-33.66h-2.1zM179.91 1320.2h2.1v-11.22h-2.1zM181.03 1320.2h2.1v-11.22h-2.1zM182.15 1320.2h2.1v-11.22h-2.1zM183.27 1320.2h2.1v-11.22h-2.1zM184.39 1320.2h2.1v-11.22h-2.1zM185.51 1320.2h2.1v-11.22h-2.1zM186.63 1320.2h2.1v-11.22h-2.1zM187.75 1320.2h2.1v-11.22h-2.1zM188.88 1320.2h2.1v-33.66h-2.1zM190 1320.2h2.1v-22.44h-2.1zM191.12 1320.2h2.1v-11.22h-2.1zM192.24 1320.2h2.1v-33.66h-2.1zM193.36 1320.2h2.1v-11.22h-2.1zM194.48 1320.2h2.1v-11.22h-2.1zM195.6 1320.2h2.1v-11.22h-2.1zM196.72 1320.2h2.1v-11.22h-2.1zM197.84 1320.2h2.1v-22.44h-2.1zM198.96 1320.2h2.1v-11.22h-2.1zM200.08 1320.2h2.1v-11.22h-2.1zM201.2 1320.2h2.1v-11.22h-2.1zM202.32 1320.2h2.1v-11.22h-2.1zM203.45 1320.2h2.1v-11.22h-2.1zM204.57 1320.2h2.1v-11.22h-2.1zM205.69 1320.2h2.1v-33.66h-2.1zM206.81 1320.2h2.1v-11.22h-2.1zM207.93 1320.2h2.1v-11.22h-2.1zM209.05 1320.2h2.1v-33.66h-2.1zM210.17 1320.2h2.1v-11.22h-2.1zM211.29 1320.2h2.1v-11.22h-2.1zM212.41 1320.2h2.1v-11.22h-2.1zM213.53 1320.2h2.1v-11.22h-2.1zM214.65 1320.2h2.1v-11.22h-2.1zM215.78 1320.2h2.1v-11.22h-2.1zM216.9 1320.2h2.1v-33.66h-2.1zM218.02 1320.2h2.1v-11.22h-2.1zM219.14 1320.2h2.1v-11.22h-2.1zM220.26 1320.2h2.1v-11.22h-2.1zM221.38 1320.2h2.1v-11.22h-2.1zM222.5 1320.2h2.1v-33.66h-2.1zM223.62 1320.2h2.1v-11.22h-2.1zM224.74 1320.2h2.1v-11.22h-2.1zM225.86 1320.2h2.1v-11.22h-2.1zM226.98 1320.2h2.1v-11.22h-2.1zM228.1 1320.2h2.1v-11.22h-2.1zM229.22 1320.2h2.1v-11.22h-2.1zM230.35 1320.2h2.1v-11.22h-2.1zM231.47 1320.2h2.1v-33.66h-2.1zM232.59 1320.2h2.1v-11.22h-2.1zM233.71 1320.2h2.1v-11.22h-2.1zM234.83 1320.2h2.1v-11.22h-2.1zM383.9 1320.2h2.1v-157.08h-2.1zM385.02 1320.2h2.1v-123.42h-2.1zM386.14 1320.2h2.1v-56.1h-2.1zM387.26 1320.2h2.1v-33.66h-2.1zM388.38 1320.2h2.1v-11.22h-2.1zM389.5 1320.2h2.1v-11.22h-2.1zM390.62 1320.2h2.1v-11.22h-2.1zM391.75 1320.2h2.1v-11.22h-2.1zM392.87 1320.2h2.1v-11.22h-2.1zM393.99 1320.2h2.1v-11.22h-2.1zM395.11 1320.2h2.1v-22.44h-2.1zM396.23 1320.2h2.1v-44.88h-2.1zM397.35 1320.2h2.1v-11.22h-2.1zM398.47 1320.2h2.1v-44.88h-2.1zM399.59 1320.2h2.1v-11.22h-2.1zM400.71 1320.2h2.1v-11.22h-2.1zM401.83 1320.2h2.1v-11.22h-2.1zM402.95 1320.2h2.1v-22.44h-2.1zM404.07 1320.2h2.1v-11.22h-2.1zM405.2 1320.2h2.1v-11.22h-2.1zM406.32 1320.2h2.1v-11.22h-2.1zM407.44 1320.2h2.1v-11.22h-2.1zM408.56 1320.2h2.1v-11.22h-2.1zM409.68 1320.2h2.1v-11.22h-2.1zM410.8 1320.2h2.1v-11.22h-2.1zM411.92 1320.2h2.1v-11.22h-2.1zM413.04 1320.2h2.1v-11.22h-2.1zM414.16 1320.2h2.1v-11.22h-2.1zM415.28 1320.2h2.1v-11.22h-2.1zM416.4 1320.2h2.1v-11.22h-2.1zM417.53 1320.2h2.1v-11.22h-2.1zM418.65 1320.2h2.1v-22.44h-2.1zM419.77 1320.2h2.1v-11.22h-2.1zM420.89 1320.2h2.1v-44.88h-2.1zM422.01 1320.2h2.1v-33.66h-2.1zM423.13 1320.2h2.1v-11.22h-2.1zM424.25 1320.2h2.1v-33.66h-2.1zM425.37 1320.2h2.1v-11.22h-2.1zM426.49 1320.2h2.1v-11.22h-2.1zM427.61 1320.2h2.1v-11.22h-2.1zM428.73 1320.2h2.1v-11.22h-2.1zM429.85 1320.2h2.1v-11.22h-2.1zM430.98 1320.2h2.1v-11.22h-2.1zM432.1 1320.2h2.1v-11.22h-2.1zM433.22 1320.2h2.1v-11.22h-2.1zM434.34 1320.2h2.1v-11.22h-2.1zM435.46 1320.2h2.1v-11.22h-2.1zM436.58 1320.2h2.1v-44.88h-2.1zM437.7 1320.2h2.1v-11.22h-2.1zM438.82 1320.2h2.1v-11.22h-2.1zM439.94 1320.2h2.1v-11.22h-2.1zM441.06 1320.2h2.1v-11.22h-2.1zM442.18 1320.2h2.1v-11.22h-2.1zM443.3 1320.2h2.1v-11.22h-2.1zM444.43 1320.2h2.1v-11.22h-2.1zM445.55 1320.2h2.1v-11.22h-2.1zM446.67 1320.2h2.1v-11.22h-2.1zM447.79 1320.2h2.1v-11.22h-2.1zM448.91 1320.2h2.1v-11.22h-2.1zM450.03 1320.2h2.1v-11.22h-2.1zM451.15 1320.2h2.1v-11.22h-2.1zM452.27 1320.2h2.1v-11.22h-2.1zM453.39 1320.2h2.1v-11.22h-2.1zM454.51 1320.2h2.1v-11.22h-2.1zM455.63 1320.2h2.1v-11.22h-2.1zM456.75 1320.2h2.1v-11.22h-2.1zM457.88 1320.2h2.1v-11.22h-2.1zM459 1320.2h2.1v-33.66h-2.1zM460.12 1320.2h2.1v-11.22h-2.1zM461.24 1320.2h2.1v-11.22h-2.1zM462.36 1320.2h2.1v-22.44h-2.1zM463.48 1320.2h2.1v-11.22h-2.1zM464.6 1320.2h2.1v-11.22h-2.1zM465.72 1320.2h2.1v-11.22h-2.1zM466.84 1320.2h2.1v-11.22h-2.1zM467.96 1320.2h2.1v-11.22h-2.1zM469.08 1320.2h2.1v-11.22h-2.1zM470.2 1320.2h2.1v-33.66h-2.1zM471.32 1320.2h2.1v-11.22h-2.1zM472.45 1320.2h2.1v-11.22h-2.1zM473.57 1320.2h2.1v-11.22h-2.1zM474.69 1320.2h2.1v-11.22h-2.1zM475.81 1320.2h2.1v-22.44h-2.1zM476.93 1320.2h2.1v-33.66h-2.1zM478.05 1320.2h2.1v-11.22h-2.1zM479.17 1320.2h2.1v-11.22h-2.1zM480.29 1320.2h2.1v-33.66h-2.1zM481.41 1320.2h2.1v-11.22h-2.1zM482.53 1320.2h2.1v-11.22h-2.1zM483.65 1320.2h2.1v-11.22h-2.1zM484.77 1320.2h2.1v-11.22h-2.1zM485.9 1320.2h2.1v-11.22h-2.1zM487.02 1320.2h2.1v-11.22h-2.1zM488.14 1320.2h2.1v-44.88h-2.1zM489.26 1320.2h2.1v-11.22h-2.1zM490.38 1320.2h2.1v-11.22h-2.1zM491.5 1320.2h2.1v-22.44h-2.1zM492.62 1320.2h2.1v-11.22h-2.1zM493.74 1320.2h2.1v-11.22h-2.1zM494.86 1320.2h2.1v-11.22h-2.1zM495.98 1320.2h2.1v-11.22h-2.1zM497.1 1320.2h2.1v-11.22h-2.1zM498.23 1320.2h2.1v-11.22h-2.1zM499.35 1320.2h2.1v-11.22h-2.1zM500.47 1320.2h2.1v-11.22h-2.1zM501.59 1320.2h2.1v-33.66h-2.1zM502.71 1320.2h2.1v-11.22h-2.1zM503.83 1320.2h2.1v-11.22h-2.1zM504.95 1320.2h2.1v-11.22h-2.1zM506.07 1320.2h2.1v-11.22h-2.1zM507.19 1320.2h2.1v-11.22h-2.1zM508.31 1320.2h2.1v-44.88h-2.1zM509.43 1320.2h2.1v-11.22h-2.1zM510.55 1320.2h2.1v-11.22h-2.1zM511.68 1320.2h2.1v-11.22h-2.1zM512.8 1320.2h2.1v-11.22h-2.1zM513.92 1320.2h2.1v-11.22h-2.1zM515.04 1320.2h2.1v-11.22h-2.1zM516.16 1320.2h2.1v-11.22h-2.1zM517.28 1320.2h2.1v-11.22h-2.1zM518.4 1320.2h2.1v-11.22h-2.1zM519.52 1320.2h2.1v-11.22h-2.1zM520.64 1320.2h2.1v-11.22h-2.1zM521.76 1320.2h2.1v-11.22h-2.1zM522.88 1320.2h2.1v-11.22h-2.1zM524 1320.2h2.1v-11.22h-2.1zM525.12 1320.2h2.1v-11.22h-2.1zM526.25 1320.2h2.1v-44.88h-2.1zM527.37 1320.2h2.1v-11.22h-2.1zM528.49 1320.2h2.1v-11.22h-2.1zM529.61 1320.2h2.1v-11.22h-2.1zM530.73 1320.2h2.1v-11.22h-2.1zM531.85 1320.2h2.1v-11.22h-2.1zM532.97 1320.2h2.1v-11.22h-2.1zM534.09 1320.2h2.1v-11.22h-2.1zM535.21 1320.2h2.1v-11.22h-2.1zM536.33 1320.2h2.1v-11.22h-2.1zM537.45 1320.2h2.1v-11.22h-2.1zM538.58 1320.2h2.1v-11.22h-2.1zM539.7 1320.2h2.1v-11.22h-2.1zM540.82 1320.2h2.1v-11.22h-2.1zM541.94 1320.2h2.1v-11.22h-2.1zM543.06 1320.2h2.1v-22.44h-2.1zM544.18 1320.2h2.1v-11.22h-2.1zM545.3 1320.2h2.1v-11.22h-2.1zM546.42 1320.2h2.1v-11.22h-2.1zM547.54 1320.2h2.1v-11.22h-2.1zM548.66 1320.2h2.1v-44.88h-2.1zM549.78 1320.2h2.1v-11.22h-2.1zM550.9 1320.2h2.1v-11.22h-2.1zM552.03 1320.2h2.1v-11.22h-2.1zM553.15 1320.2h2.1v-11.22h-2.1zM554.27 1320.2h2.1v-11.22h-2.1zM555.39 1320.2h2.1v-11.22h-2.1zM556.51 1320.2h2.1v-33.66h-2.1zM557.63 1320.2h2.1v-11.22h-2.1zM558.75 1320.2h2.1v-11.22h-2.1zM559.87 1320.2h2.1v-11.22h-2.1zM560.99 1320.2h2.1v-11.22h-2.1zM562.11 1320.2h2.1v-22.44h-2.1zM563.23 1320.2h2.1v-11.22h-2.1zM564.35 1320.2h2.1v-11.22h-2.1zM565.48 1320.2h2.1v-44.88h-2.1zM566.6 1320.2h2.1v-11.22h-2.1zM567.72 1320.2h2.1v-11.22h-2.1zM568.84 1320.2h2.1v-11.22h-2.1zM569.96 1320.2h2.1v-11.22h-2.1zM571.08 1320.2h2.1v-11.22h-2.1zM572.2 1320.2h2.1v-11.22h-2.1zM573.32 1320.2h2.1v-11.22h-2.1zM574.44 1320.2h2.1v-11.22h-2.1zM575.56 1320.2h2.1v-11.22h-2.1zM576.68 1320.2h2.1v-11.22h-2.1zM577.8 1320.2h2.1v-22.44h-2.1zM578.93 1320.2h2.1v-11.22h-2.1zM580.05 1320.2h2.1v-11.22h-2.1zM581.17 1320.2h2.1v-11.22h-2.1zM582.29 1320.2h2.1v-11.22h-2.1zM583.41 1320.2h2.1v-11.22h-2.1zM584.53 1320.2h2.1v-11.22h-2.1zM585.65 1320.2h2.1v-22.44h-2.1zM586.77 1320.2h2.1v-33.66h-2.1zM587.89 1320.2h2.1v-11.22h-2.1zM589.01 1320.2h2.1v-11.22h-2.1zM590.13 1320.2h2.1v-11.22h-2.1zM591.25 1320.2h2.1v-11.22h-2.1zM592.38 1320.2h2.1v-11.22h-2.1zM593.5 1320.2h2.1v-11.22h-2.1zM594.62 1320.2h2.1v-11.22h-2.1zM595.74 1320.2h2.1v-11.22h-2.1zM596.86 1320.2h2.1v-33.66h-2.1zM597.98 1320.2h2.1v-11.22h-2.1zM599.1 1320.2h2.1v-11.22h-2.1zM600.22 1320.2h2.1v-11.22h-2.1zM601.34 1320.2h2.1v-11.22h-2.1zM602.46 1320.2h2.1v-11.22h-2.1zM603.58 1320.2h2.1v-22.44h-2.1zM604.7 1320.2h2.1v-11.22h-2.1zM605.83 1320.2h2.1v-11.22h-2.1zM606.95 1320.2h2.1v-11.22h-2.1zM608.07 1320.2h2.1v-11.22h-2.1zM609.19 1320.2h2.1v-11.22h-2.1zM610.31 1320.2h2.1v-11.22h-2.1zM611.43 1320.2h2.1v-33.66h-2.1zM612.55 1320.2h2.1v-11.22h-2.1zM613.67 1320.2h2.1v-11.22h-2.1zM614.79 1320.2h2.1v-11.22h-2.1zM615.91 1320.2h2.1v-11.22h-2.1zM617.03 1320.2h2.1v-11.22h-2.1zM618.15 1320.2h2.1v-11.22h-2.1zM619.28 1320.2h2.1v-11.22h-2.1zM620.4 1320.2h2.1v-11.22h-2.1zM621.52 1320.2h2.1v-11.22h-2.1zM622.64 1320.2h2.1v-11.22h-2.1zM623.76 1320.2h2.1v-11.22h-2.1zM624.88 1320.2h2.1v-11.22h-2.1zM626 1320.2h2.1v-11.22h-2.1zM627.12 1320.2h2.1v-22.44h-2.1zM628.24 1320.2h2.1v-11.22h-2.1zM629.36 1320.2h2.1v-11.22h-2.1zM630.48 1320.2h2.1v-11.22h-2.1zM631.6 1320.2h2.1v-33.66h-2.1zM632.73 1320.2h2.1v-11.22h-2.1zM633.85 1320.2h2.1v-11.22h-2.1zM634.97 1320.2h2.1v-11.22h-2.1zM636.09 1320.2h2.1v-11.22h-2.1zM637.21 1320.2h2.1v-11.22h-2.1zM638.33 1320.2h2.1v-11.22h-2.1zM639.45 1320.2h2.1v-11.22h-2.1zM640.57 1320.2h2.1v-11.22h-2.1zM641.69 1320.2h2.1v-11.22h-2.1zM642.81 1320.2h2.1v-11.22h-2.1zM643.93 1320.2h2.1v-11.22h-2.1zM645.05 1320.2h2.1v-11.22h-2.1zM646.18 1320.2h2.1v-11.22h-2.1zM647.3 1320.2h2.1v-11.22h-2.1zM648.42 1320.2h2.1v-11.22h-2.1zM649.54 1320.2h2.1v-11.22h-2.1zM650.66 1320.2h2.1v-11.22h-2.1zM651.78 1320.2h2.1v-44.88h-2.1zM652.9 1320.2h2.1v-11.22h-2.1zM654.02 1320.2h2.1v-11.22h-2.1zM655.14 1320.2h2.1v-11.22h-2.1zM656.26 1320.2h2.1v-11.22h-2.1zM657.38 1320.2h2.1v-11.22h-2.1zM658.5 1320.2h2.1v-22.44h-2.1zM659.62 1320.2h2.1v-22.44h-2.1zM660.75 1320.2h2.1v-11.22h-2.1zM661.87 1320.2h2.1v-11.22h-2.1zM662.99 1320.2h2.1v-11.22h-2.1zM664.11 1320.2h2.1v-11.22h-2.1zM665.23 1320.2h2.1v-11.22h-2.1zM666.35 1320.2h2.1v-11.22h-2.1zM667.47 1320.2h2.1v-11.22h-2.1zM668.59 1320.2h2.1v-11.22h-2.1zM669.71 1320.2h2.1v-11.22h-2.1zM670.83 1320.2h2.1v-33.66h-2.1zM671.95 1320.2h2.1v-11.22h-2.1zM673.08 1320.2h2.1v-11.22h-2.1zM674.2 1320.2h2.1v-11.22h-2.1zM675.32 1320.2h2.1v-11.22h-2.1zM676.44 1320.2h2.1v-11.22h-2.1zM677.56 1320.2h2.1v-11.22h-2.1zM678.68 1320.2h2.1v-11.22h-2.1zM679.8 1320.2h2.1v-11.22h-2.1zM680.92 1320.2h2.1v-11.22h-2.1zM682.04 1320.2h2.1v-11.22h-2.1zM683.16 1320.2h2.1v-11.22h-2.1zM684.28 1320.2h2.1v-11.22h-2.1zM685.4 1320.2h2.1v-11.22h-2.1zM686.53 1320.2h2.1v-11.22h-2.1zM687.65 1320.2h2.1v-11.22h-2.1zM688.77 1320.2h2.1v-11.22h-2.1zM689.89 1320.2h2.1v-11.22h-2.1zM691.01 1320.2h2.1v-11.22h-2.1zM692.13 1320.2h2.1v-11.22h-2.1zM693.25 1320.2h2.1v-11.22h-2.1zM694.37 1320.2h2.1v-33.66h-2.1zM695.49 1320.2h2.1v-11.22h-2.1zM696.61 1320.2h2.1v-11.22h-2.1zM697.73 1320.2h2.1v-11.22h-2.1zM698.85 1320.2h2.1v-11.22h-2.1zM699.98 1320.2h2.1v-11.22h-2.1zM701.1 1320.2h2.1v-11.22h-2.1zM702.22 1320.2h2.1v-11.22h-2.1zM703.34 1320.2h2.1v-11.22h-2.1zM704.46 1320.2h2.1v-22.44h-2.1zM705.58 1320.2h2.1v-11.22h-2.1zM706.7 1320.2h2.1v-22.44h-2.1zM707.82 1320.2h2.1v-22.44h-2.1zM708.94 1320.2h2.1v-11.22h-2.1zM710.06 1320.2h2.1v-22.44h-2.1zM711.18 1320.2h2.1v-33.66h-2.1zM712.3 1320.2h2.1v-11.22h-2.1zM713.42 1320.2h2.1v-11.22h-2.1zM714.55 1320.2h2.1v-11.22h-2.1zM715.67 1320.2h2.1v-22.44h-2.1zM716.79 1320.2h2.1v-11.22h-2.1zM717.91 1320.2h2.1v-11.22h-2.1zM719.03 1320.2h2.1v-11.22h-2.1zM720.15 1320.2h2.1v-11.22h-2.1zM721.27 1320.2h2.1v-11.22h-2.1zM722.39 1320.2h2.1v-11.22h-2.1zM723.51 1320.2h2.1v-22.44h-2.1zM724.63 1320.2h2.1v-33.66h-2.1zM725.75 1320.2h2.1v-11.22h-2.1zM726.88 1320.2h2.1v-11.22h-2.1zM728 1320.2h2.1v-11.22h-2.1zM729.12 1320.2h2.1v-11.22h-2.1zM730.24 1320.2h2.1v-22.44h-2.1zM731.36 1320.2h2.1v-33.66h-2.1zM732.48 1320.2h2.1v-11.22h-2.1zM733.6 1320.2h2.1v-11.22h-2.1zM734.72 1320.2h2.1v-11.22h-2.1zM735.84 1320.2h2.1v-11.22h-2.1zM736.96 1320.2h2.1v-11.22h-2.1zM738.08 1320.2h2.1v-11.22h-2.1zM739.2 1320.2h2.1v-11.22h-2.1zM740.33 1320.2h2.1v-11.22h-2.1zM741.45 1320.2h2.1v-11.22h-2.1zM742.57 1320.2h2.1v-11.22h-2.1zM743.69 1320.2h2.1v-22.44h-2.1zM744.81 1320.2h2.1v-11.22h-2.1zM745.93 1320.2h2.1v-11.22h-2.1zM747.05 1320.2h2.1v-33.66h-2.1zM748.17 1320.2h2.1v-44.88h-2.1zM749.29 1320.2h2.1v-22.44h-2.1zM750.41 1320.2h2.1v-11.22h-2.1zM751.53 1320.2h2.1v-11.22h-2.1zM752.65 1320.2h2.1v-11.22h-2.1zM753.78 1320.2h2.1v-11.22h-2.1zM754.9 1320.2h2.1v-11.22h-2.1zM756.02 1320.2h2.1v-11.22h-2.1zM757.14 1320.2h2.1v-22.44h-2.1zM758.26 1320.2h2.1v-44.88h-2.1zM759.38 1320.2h2.1v-11.22h-2.1zM760.5 1320.2h2.1v-11.22h-2.1zM761.62 1320.2h2.1v-11.22h-2.1zM762.74 1320.2h2.1v-11.22h-2.1zM763.86 1320.2h2.1v-11.22h-2.1zM764.98 1320.2h2.1v-22.44h-2.1zM766.1 1320.2h2.1v-22.44h-2.1zM767.23 1320.2h2.1v-11.22h-2.1zM768.35 1320.2h2.1v-11.22h-2.1zM769.47 1320.2h2.1v-11.22h-2.1zM770.59 1320.2h2.1v-33.66h-2.1zM771.71 1320.2h2.1v-11.22h-2.1zM772.83 1320.2h2.1v-11.22h-2.1zM773.95 1320.2h2.1v-22.44h-2.1zM775.07 1320.2h2.1v-11.22h-2.1zM776.19 1320.2h2.1v-11.22h-2.1zM777.31 1320.2h2.1v-11.22h-2.1zM778.43 1320.2h2.1v-11.22h-2.1zM779.55 1320.2h2.1v-11.22h-2.1zM780.68 1320.2h2.1v-11.22h-2.1zM781.8 1320.2h2.1v-11.22h-2.1zM782.92 1320.2h2.1v-11.22h-2.1zM784.04 1320.2h2.1v-22.44h-2.1zM785.16 1320.2h2.1v-11.22h-2.1zM786.28 1320.2h2.1v-11.22h-2.1zM787.4 1320.2h2.1v-44.88h-2.1zM788.52 1320.2h2.1v-22.44h-2.1zM789.64 1320.2h2.1v-11.22h-2.1zM790.76 1320.2h2.1v-11.22h-2.1zM791.88 1320.2h2.1v-11.22h-2.1zM793 1320.2h2.1v-11.22h-2.1zM794.12 1320.2h2.1v-11.22h-2.1zM795.25 1320.2h2.1v-11.22h-2.1zM796.37 1320.2h2.1v-11.22h-2.1zM797.49 1320.2h2.1v-11.22h-2.1zM798.61 1320.2h2.1v-11.22h-2.1zM799.73 1320.2h2.1v-22.44h-2.1zM800.85 1320.2h2.1v-11.22h-2.1zM801.97 1320.2h2.1v-22.44h-2.1zM803.09 1320.2h2.1v-22.44h-2.1zM804.21 1320.2h2.1v-11.22h-2.1zM805.33 1320.2h2.1v-22.44h-2.1zM806.45 1320.2h2.1v-22.44h-2.1zM807.58 1320.2h2.1v-11.22h-2.1zM808.7 1320.2h2.1v-44.88h-2.1zM809.82 1320.2h2.1v-33.66h-2.1zM810.94 1320.2h2.1v-22.44h-2.1zM812.06 1320.2h2.1v-11.22h-2.1zM813.18 1320.2h2.1v-11.22h-2.1zM814.3 1320.2h2.1v-11.22h-2.1zM815.42 1320.2h2.1v-11.22h-2.1zM816.54 1320.2h2.1v-22.44h-2.1zM817.66 1320.2h2.1v-11.22h-2.1zM818.78 1320.2h2.1v-11.22h-2.1zM819.9 1320.2h2.1v-22.44h-2.1zM821.03 1320.2h2.1v-44.88h-2.1zM822.15 1320.2h2.1v-22.44h-2.1zM823.27 1320.2h2.1v-22.44h-2.1zM824.39 1320.2h2.1v-22.44h-2.1zM825.51 1320.2h2.1v-11.22h-2.1zM826.63 1320.2h2.1v-33.66h-2.1zM827.75 1320.2h2.1v-22.44h-2.1zM828.87 1320.2h2.1v-22.44h-2.1zM829.99 1320.2h2.1v-22.44h-2.1zM831.11 1320.2h2.1v-11.22h-2.1zM832.23 1320.2h2.1v-11.22h-2.1zM833.35 1320.2h2.1v-11.22h-2.1zM834.48 1320.2h2.1v-33.66h-2.1zM835.6 1320.2h2.1v-22.44h-2.1zM836.72 1320.2h2.1v-22.44h-2.1zM837.84 1320.2h2.1v-11.22h-2.1zM838.96 1320.2h2.1v-11.22h-2.1zM840.08 1320.2h2.1v-11.22h-2.1zM841.2 1320.2h2.1v-11.22h-2.1zM842.32 1320.2h2.1v-22.44h-2.1zM843.44 1320.2h2.1v-11.22h-2.1zM844.56 1320.2h2.1v-22.44h-2.1zM845.68 1320.2h2.1v-11.22h-2.1zM846.8 1320.2h2.1v-11.22h-2.1zM847.93 1320.2h2.1v-22.44h-2.1zM849.05 1320.2h2.1v-22.44h-2.1zM850.17 1320.2h2.1v-11.22h-2.1zM851.29 1320.2h2.1v-44.88h-2.1zM852.41 1320.2h2.1v-11.22h-2.1zM853.53 1320.2h2.1v-22.44h-2.1zM854.65 1320.2h2.1v-22.44h-2.1zM855.77 1320.2h2.1v-22.44h-2.1zM856.89 1320.2h2.1v-22.44h-2.1zM858.01 1320.2h2.1v-22.44h-2.1zM859.13 1320.2h2.1v-11.22h-2.1zM860.25 1320.2h2.1v-11.22h-2.1zM861.38 1320.2h2.1v-22.44h-2.1zM862.5 1320.2h2.1v-11.22h-2.1zM863.62 1320.2h2.1v-11.22h-2.1zM864.74 1320.2h2.1v-11.22h-2.1zM865.86 1320.2h2.1v-33.66h-2.1zM866.98 1320.2h2.1v-11.22h-2.1zM868.1 1320.2h2.1v-22.44h-2.1zM869.22 1320.2h2.1v-22.44h-2.1zM870.34 1320.2h2.1v-22.44h-2.1zM871.46 1320.2h2.1v-22.44h-2.1zM872.58 1320.2h2.1v-22.44h-2.1zM873.7 1320.2h2.1v-11.22h-2.1zM874.83 1320.2h2.1v-11.22h-2.1zM875.95 1320.2h2.1v-11.22h-2.1zM877.07 1320.2h2.1v-11.22h-2.1zM878.19 1320.2h2.1v-44.88h-2.1zM879.31 1320.2h2.1v-22.44h-2.1zM880.43 1320.2h2.1v-11.22h-2.1zM881.55 1320.2h2.1v-11.22h-2.1zM882.67 1320.2h2.1v-22.44h-2.1zM883.79 1320.2h2.1v-22.44h-2.1zM884.91 1320.2h2.1v-11.22h-2.1zM886.03 1320.2h2.1v-11.22h-2.1zM887.15 1320.2h2.1v-22.44h-2.1zM888.28 1320.2h2.1v-11.22h-2.1zM889.4 1320.2h2.1v-33.66h-2.1zM890.52 1320.2h2.1v-22.44h-2.1zM891.64 1320.2h2.1v-11.22h-2.1zM892.76 1320.2h2.1v-22.44h-2.1zM893.88 1320.2h2.1v-22.44h-2.1zM895 1320.2h2.1v-11.22h-2.1zM896.12 1320.2h2.1v-11.22h-2.1zM897.24 1320.2h2.1v-11.22h-2.1zM898.36 1320.2h2.1v-22.44h-2.1zM899.48 1320.2h2.1v-22.44h-2.1zM900.6 1320.2h2.1v-11.22h-2.1zM901.73 1320.2h2.1v-11.22h-2.1zM902.85 1320.2h2.1v-11.22h-2.1zM903.97 1320.2h2.1v-22.44h-2.1zM905.09 1320.2h2.1v-22.44h-2.1zM906.21 1320.2h2.1v-22.44h-2.1zM907.33 1320.2h2.1v-33.66h-2.1zM908.45 1320.2h2.1v-11.22h-2.1zM909.57 1320.2h2.1v-22.44h-2.1zM910.69 1320.2h2.1v-11.22h-2.1zM911.81 1320.2h2.1v-44.88h-2.1zM912.93 1320.2h2.1v-11.22h-2.1zM914.05 1320.2h2.1v-11.22h-2.1zM915.17 1320.2h2.1v-11.22h-2.1zM916.3 1320.2h2.1v-11.22h-2.1zM917.42 1320.2h2.1v-11.22h-2.1zM918.54 1320.2h2.1v-11.22h-2.1zM919.66 1320.2h2.1v-33.66h-2.1zM920.78 1320.2h2.1v-11.22h-2.1zM921.9 1320.2h2.1v-22.44h-2.1zM923.02 1320.2h2.1v-22.44h-2.1zM924.14 1320.2h2.1v-11.22h-2.1zM925.26 1320.2h2.1v-22.44h-2.1zM926.38 1320.2h2.1v-11.22h-2.1zM927.5 1320.2h2.1v-11.22h-2.1zM928.63 1320.2h2.1v-11.22h-2.1zM929.75 1320.2h2.1v-22.44h-2.1zM930.87 1320.2h2.1v-22.44h-2.1zM931.99 1320.2h2.1v-22.44h-2.1zM933.11 1320.2h2.1v-22.44h-2.1zM934.23 1320.2h2.1v-44.88h-2.1zM935.35 1320.2h2.1v-11.22h-2.1zM936.47 1320.2h2.1v-11.22h-2.1zM937.59 1320.2h2.1v-11.22h-2.1zM938.71 1320.2h2.1v-11.22h-2.1zM939.83 1320.2h2.1v-11.22h-2.1zM940.95 1320.2h2.1v-11.22h-2.1zM942.08 1320.2h2.1v-22.44h-2.1zM943.2 1320.2h2.1v-11.22h-2.1zM944.32 1320.2h2.1v-22.44h-2.1zM945.44 1320.2h2.1v-11.22h-2.1zM946.56 1320.2h2.1v-11.22h-2.1zM947.68 1320.2h2.1v-11.22h-2.1zM948.8 1320.2h2.1v-11.22h-2.1zM949.92 1320.2h2.1v-33.66h-2.1zM951.04 1320.2h2.1v-11.22h-2.1zM952.16 1320.2h2.1v-11.22h-2.1zM953.28 1320.2h2.1v-22.44h-2.1zM954.4 1320.2h2.1v-11.22h-2.1zM955.53 1320.2h2.1v-22.44h-2.1zM956.65 1320.2h2.1v-22.44h-2.1zM957.77 1320.2h2.1v-11.22h-2.1zM958.89 1320.2h2.1v-22.44h-2.1zM960.01 1320.2h2.1v-22.44h-2.1zM961.13 1320.2h2.1v-11.22h-2.1zM962.25 1320.2h2.1v-22.44h-2.1zM963.37 1320.2h2.1v-11.22h-2.1zM964.49 1320.2h2.1v-44.88h-2.1zM965.61 1320.2h2.1v-11.22h-2.1zM966.73 1320.2h2.1v-22.44h-2.1zM967.85 1320.2h2.1v-22.44h-2.1zM968.98 1320.2h2.1v-11.22h-2.1zM970.1 1320.2h2.1v-22.44h-2.1zM971.22 1320.2h2.1v-11.22h-2.1zM972.34 1320.2h2.1v-22.44h-2.1zM973.46 1320.2h2.1v-22.44h-2.1zM974.58 1320.2h2.1v-33.66h-2.1zM975.7 1320.2h2.1v-11.22h-2.1zM976.82 1320.2h2.1v-11.22h-2.1zM977.94 1320.2h2.1v-33.66h-2.1zM979.06 1320.2h2.1v-22.44h-2.1zM980.18 1320.2h2.1v-11.22h-2.1zM981.3 1320.2h2.1v-11.22h-2.1zM982.43 1320.2h2.1v-44.88h-2.1zM983.55 1320.2h2.1v-22.44h-2.1zM984.67 1320.2h2.1v-11.22h-2.1zM985.79 1320.2h2.1v-11.22h-2.1zM986.91 1320.2h2.1v-11.22h-2.1zM988.03 1320.2h2.1v-22.44h-2.1zM989.15 1320.2h2.1v-11.22h-2.1zM990.27 1320.2h2.1v-11.22h-2.1zM991.39 1320.2h2.1v-22.44h-2.1zM992.51 1320.2h2.1v-11.22h-2.1zM993.63 1320.2h2.1v-22.44h-2.1zM994.75 1320.2h2.1v-22.44h-2.1zM995.88 1320.2h2.1v-56.1h-2.1zM997 1320.2h2.1v-11.22h-2.1zM998.12 1320.2h2.1v-11.22h-2.1zM999.24 1320.2h2.1v-11.22h-2.1zM1000.36 1320.2h2.1v-22.44h-2.1zM1001.48 1320.2h2.1v-22.44h-2.1zM1002.6 1320.2h2.1v-44.88h-2.1zM1003.72 1320.2h2.1v-22.44h-2.1zM1004.84 1320.2h2.1v-11.22h-2.1zM1005.96 1320.2h2.1v-22.44h-2.1zM1007.08 1320.2h2.1v-11.22h-2.1zM1008.2 1320.2h2.1v-22.44h-2.1zM1009.33 1320.2h2.1v-22.44h-2.1zM1010.45 1320.2h2.1v-22.44h-2.1zM1011.57 1320.2h2.1v-22.44h-2.1zM1012.69 1320.2h2.1v-22.44h-2.1zM1013.81 1320.2h2.1v-11.22h-2.1zM1014.93 1320.2h2.1v-11.22h-2.1zM1016.05 1320.2h2.1v-11.22h-2.1zM1017.17 1320.2h2.1v-33.66h-2.1zM1018.29 1320.2h2.1v-22.44h-2.1zM1019.41 1320.2h2.1v-11.22h-2.1zM1020.53 1320.2h2.1v-11.22h-2.1zM1021.65 1320.2h2.1v-11.22h-2.1zM1022.78 1320.2h2.1v-11.22h-2.1zM1023.9 1320.2h2.1v-22.44h-2.1zM1025.02 1320.2h2.1v-11.22h-2.1zM1026.14 1320.2h2.1v-11.22h-2.1zM1027.26 1320.2h2.1v-22.44h-2.1zM1028.38 1320.2h2.1v-22.44h-2.1zM1029.5 1320.2h2.1v-22.44h-2.1zM1030.62 1320.2h2.1v-11.22h-2.1zM1031.74 1320.2h2.1v-22.44h-2.1zM1032.86 1320.2h2.1v-22.44h-2.1zM1033.98 1320.2h2.1v-11.22h-2.1zM1035.1 1320.2h2.1v-11.22h-2.1zM1036.23 1320.2h2.1v-44.88h-2.1zM1037.35 1320.2h2.1v-11.22h-2.1zM1038.47 1320.2h2.1v-11.22h-2.1zM1039.59 1320.2h2.1v-11.22h-2.1zM1040.71 1320.2h2.1v-11.22h-2.1zM1041.83 1320.2h2.1v-11.22h-2.1zM1042.95 1320.2h2.1v-11.22h-2.1zM1044.07 1320.2h2.1v-11.22h-2.1zM1045.19 1320.2h2.1v-22.44h-2.1zM1046.31 1320.2h2.1v-11.22h-2.1zM1047.43 1320.2h2.1v-11.22h-2.1zM1048.55 1320.2h2.1v-11.22h-2.1zM1049.68 1320.2h2.1v-22.44h-2.1zM1050.8 1320.2h2.1v-33.66h-2.1zM1051.92 1320.2h2.1v-22.44h-2.1zM1053.04 1320.2h2.1v-11.22h-2.1zM1054.16 1320.2h2.1v-22.44h-2.1zM1055.28 1320.2h2.1v-22.44h-2.1zM1056.4 1320.2h2.1v-22.44h-2.1zM1057.52 1320.2h2.1v-11.22h-2.1zM1058.64 1320.2h2.1v-11.22h-2.1zM1059.76 1320.2h2.1v-22.44h-2.1zM1060.88 1320.2h2.1v-11.22h-2.1zM1062 1320.2h2.1v-44.88h-2.1zM1063.12 1320.2h2.1v-11.22h-2.1zM1064.25 1320.2h2.1v-11.22h-2.1zM1065.37 1320.2h2.1v-11.22h-2.1zM1066.49 1320.2h2.1v-22.44h-2.1zM1067.61 1320.2h2.1v-11.22h-2.1zM1068.73 1320.2h2.1v-22.44h-2.1zM1069.85 1320.2h2.1v-22.44h-2.1zM1070.97 1320.2h2.1v-11.22h-2.1zM1072.09 1320.2h2.1v-22.44h-2.1zM1073.21 1320.2h2.1v-11.22h-2.1zM1074.33 1320.2h2.1v-11.22h-2.1zM1075.45 1320.2h2.1v-33.66h-2.1zM1076.58 1320.2h2.1v-11.22h-2.1zM1077.7 1320.2h2.1v-11.22h-2.1zM1078.82 1320.2h2.1v-22.44h-2.1zM1079.94 1320.2h2.1v-44.88h-2.1zM1081.06 1320.2h2.1v-11.22h-2.1zM1082.18 1320.2h2.1v-22.44h-2.1zM1083.3 1320.2h2.1v-11.22h-2.1zM1084.42 1320.2h2.1v-33.66h-2.1zM1085.54 1320.2h2.1v-11.22h-2.1zM1086.66 1320.2h2.1v-11.22h-2.1zM1087.78 1320.2h2.1v-11.22h-2.1zM1088.9 1320.2h2.1v-22.44h-2.1zM1090.03 1320.2h2.1v-11.22h-2.1zM1091.15 1320.2h2.1v-11.22h-2.1zM1092.27 1320.2h2.1v-11.22h-2.1zM1093.39 1320.2h2.1v-11.22h-2.1zM1094.51 1320.2h2.1v-22.44h-2.1zM1095.63 1320.2h2.1v-11.22h-2.1zM1096.75 1320.2h2.1v-44.88h-2.1zM1097.87 1320.2h2.1v-22.44h-2.1zM1098.99 1320.2h2.1v-22.44h-2.1zM1100.11 1320.2h2.1v-33.66h-2.1zM1101.23 1320.2h2.1v-22.44h-2.1zM1102.35 1320.2h2.1v-11.22h-2.1zM1103.48 1320.2h2.1v-11.22h-2.1zM1104.6 1320.2h2.1v-11.22h-2.1zM1105.72 1320.2h2.1v-22.44h-2.1zM1106.84 1320.2h2.1v-11.22h-2.1zM1107.96 1320.2h2.1v-22.44h-2.1zM1109.08 1320.2h2.1v-22.44h-2.1zM1110.2 1320.2h2.1v-22.44h-2.1zM1111.32 1320.2h2.1v-22.44h-2.1zM1112.44 1320.2h2.1v-22.44h-2.1zM1113.56 1320.2h2.1v-22.44h-2.1zM1114.68 1320.2h2.1v-22.44h-2.1zM1115.8 1320.2h2.1v-33.66h-2.1zM1116.92 1320.2h2.1v-33.66h-2.1zM1118.05 1320.2h2.1v-11.22h-2.1zM1119.17 1320.2h2.1v-22.44h-2.1zM1120.29 1320.2h2.1v-22.44h-2.1zM1121.41 1320.2h2.1v-22.44h-2.1zM1122.53 1320.2h2.1v-11.22h-2.1zM1123.65 1320.2h2.1v-11.22h-2.1zM1124.77 1320.2h2.1v-22.44h-2.1zM1125.89 1320.2h2.1v-11.22h-2.1zM1127.01 1320.2h2.1v-11.22h-2.1zM1128.13 1320.2h2.1v-22.44h-2.1zM1129.25 1320.2h2.1v-22.44h-2.1zM1130.38 1320.2h2.1v-22.44h-2.1zM1131.5 1320.2h2.1v-11.22h-2.1zM1132.62 1320.2h2.1v-22.44h-2.1zM1133.74 1320.2h2.1v-22.44h-2.1zM1134.86 1320.2h2.1v-22.44h-2.1zM1135.98 1320.2h2.1v-22.44h-2.1zM1137.1 1320.2h2.1v-44.88h-2.1zM1138.22 1320.2h2.1v-22.44h-2.1zM1139.34 1320.2h2.1v-11.22h-2.1zM1140.46 1320.2h2.1v-11.22h-2.1zM1141.58 1320.2h2.1v-11.22h-2.1zM1142.7 1320.2h2.1v-22.44h-2.1zM1143.83 1320.2h2.1v-11.22h-2.1zM1144.95 1320.2h2.1v-22.44h-2.1zM1146.07 1320.2h2.1v-22.44h-2.1zM1147.19 1320.2h2.1v-22.44h-2.1zM1148.31 1320.2h2.1v-22.44h-2.1zM1149.43 1320.2h2.1v-11.22h-2.1zM1150.55 1320.2h2.1v-11.22h-2.1zM1151.67 1320.2h2.1v-11.22h-2.1zM1152.79 1320.2h2.1v-33.66h-2.1zM1153.91 1320.2h2.1v-22.44h-2.1zM1155.03 1320.2h2.1v-11.22h-2.1zM1156.15 1320.2h2.1v-22.44h-2.1zM1157.28 1320.2h2.1v-22.44h-2.1zM1158.4 1320.2h2.1v-33.66h-2.1zM1159.52 1320.2h2.1v-11.22h-2.1zM1160.64 1320.2h2.1v-22.44h-2.1zM1161.76 1320.2h2.1v-22.44h-2.1zM1162.88 1320.2h2.1v-22.44h-2.1zM1164 1320.2h2.1v-22.44h-2.1zM1165.12 1320.2h2.1v-11.22h-2.1zM1166.24 1320.2h2.1v-22.44h-2.1zM1167.36 1320.2h2.1v-11.22h-2.1zM1168.48 1320.2h2.1v-33.66h-2.1zM1169.6 1320.2h2.1v-22.44h-2.1zM1170.73 1320.2h2.1v-22.44h-2.1zM1171.85 1320.2h2.1v-11.22h-2.1zM1172.97 1320.2h2.1v-11.22h-2.1zM1174.09 1320.2h2.1v-22.44h-2.1zM1175.21 1320.2h2.1v-22.44h-2.1zM1176.33 1320.2h2.1v-22.44h-2.1zM1177.45 1320.2h2.1v-22.44h-2.1zM1178.57 1320.2h2.1v-22.44h-2.1zM1179.69 1320.2h2.1v-11.22h-2.1zM1180.81 1320.2h2.1v-22.44h-2.1zM1181.93 1320.2h2.1v-11.22h-2.1zM1183.05 1320.2h2.1v-11.22h-2.1zM1184.17 1320.2h2.1v-22.44h-2.1zM1185.3 1320.2h2.1v-22.44h-2.1zM1186.42 1320.2h2.1v-44.88h-2.1zM1187.54 1320.2h2.1v-33.66h-2.1zM1188.66 1320.2h2.1v-11.22h-2.1zM1189.78 1320.2h2.1v-22.44h-2.1zM1190.9 1320.2h2.1v-22.44h-2.1zM1192.02 1320.2h2.1v-11.22h-2.1zM1193.14 1320.2h2.1v-22.44h-2.1zM1194.26 1320.2h2.1v-11.22h-2.1zM1195.38 1320.2h2.1v-11.22h-2.1zM1196.5 1320.2h2.1v-11.22h-2.1zM1197.62 1320.2h2.1v-22.44h-2.1zM1198.75 1320.2h2.1v-22.44h-2.1zM1199.87 1320.2h2.1v-22.44h-2.1zM1200.99 1320.2h2.1v-22.44h-2.1zM1202.11 1320.2h2.1v-22.44h-2.1zM1203.23 1320.2h2.1v-22.44h-2.1zM1352.3 1320.2h2.1v-89.76h-2.1zM1353.42 1320.2h2.1v-44.88h-2.1zM1354.54 1320.2h2.1v-22.44h-2.1zM1355.66 1320.2h2.1v-22.44h-2.1zM1356.78 1320.2h2.1v-11.22h-2.1zM1357.9 1320.2h2.1v-11.22h-2.1zM1359.03 1320.2h2.1v-22.44h-2.1zM1360.15 1320.2h2.1v-33.66h-2.1zM1361.27 1320.2h2.1v-22.44h-2.1zM1362.39 1320.2h2.1v-22.44h-2.1zM1363.51 1320.2h2.1v-11.22h-2.1zM1364.63 1320.2h2.1v-22.44h-2.1zM1365.75 1320.2h2.1v-22.44h-2.1zM1366.87 1320.2h2.1v-11.22h-2.1zM1367.99 1320.2h2.1v-22.44h-2.1zM1369.11 1320.2h2.1v-22.44h-2.1zM1370.23 1320.2h2.1v-22.44h-2.1zM1371.35 1320.2h2.1v-22.44h-2.1zM1372.48 1320.2h2.1v-22.44h-2.1zM1373.6 1320.2h2.1v-22.44h-2.1zM1374.72 1320.2h2.1v-33.66h-2.1zM1375.84 1320.2h2.1v-44.88h-2.1zM1376.96 1320.2h2.1v-22.44h-2.1zM1378.08 1320.2h2.1v-11.22h-2.1zM1379.2 1320.2h2.1v-33.66h-2.1zM1380.32 1320.2h2.1v-22.44h-2.1zM1381.44 1320.2h2.1v-22.44h-2.1zM1382.56 1320.2h2.1v-22.44h-2.1zM1383.68 1320.2h2.1v-22.44h-2.1zM1384.8 1320.2h2.1v-22.44h-2.1zM1385.92 1320.2h2.1v-22.44h-2.1zM1387.05 1320.2h2.1v-22.44h-2.1zM1388.17 1320.2h2.1v-33.66h-2.1zM1389.29 1320.2h2.1v-22.44h-2.1zM1390.41 1320.2h2.1v-22.44h-2.1zM1391.53 1320.2h2.1v-22.44h-2.1zM1392.65 1320.2h2.1v-22.44h-2.1zM1393.77 1320.2h2.1v-33.66h-2.1zM1394.89 1320.2h2.1v-22.44h-2.1zM1396.01 1320.2h2.1v-22.44h-2.1zM1397.13 1320.2h2.1v-22.44h-2.1zM1398.25 1320.2h2.1v-33.66h-2.1zM1399.38 1320.2h2.1v-22.44h-2.1zM1400.5 1320.2h2.1v-33.66h-2.1zM1401.62 1320.2h2.1v-22.44h-2.1zM1402.74 1320.2h2.1v-33.66h-2.1zM1403.86 1320.2h2.1v-33.66h-2.1zM1404.98 1320.2h2.1v-33.66h-2.1zM1406.1 1320.2h2.1v-44.88h-2.1zM1407.22 1320.2h2.1v-33.66h-2.1zM1408.34 1320.2h2.1v-33.66h-2.1zM1409.46 1320.2h2.1v-33.66h-2.1zM1410.58 1320.2h2.1v-33.66h-2.1zM1411.7 1320.2h2.1v-22.44h-2.1zM1412.83 1320.2h2.1v-33.66h-2.1zM1413.95 1320.2h2.1v-33.66h-2.1zM1415.07 1320.2h2.1v-33.66h-2.1zM1416.19 1320.2h2.1v-22.44h-2.1zM1417.31 1320.2h2.1v-44.88h-2.1zM1418.43 1320.2h2.1v-33.66h-2.1zM1419.55 1320.2h2.1v-22.44h-2.1zM1420.67 1320.2h2.1v-22.44h-2.1zM1421.79 1320.2h2.1v-33.66h-2.1zM1422.91 1320.2h2.1v-33.66h-2.1zM1424.03 1320.2h2.1v-44.88h-2.1zM1425.15 1320.2h2.1v-44.88h-2.1zM1426.28 1320.2h2.1v-33.66h-2.1zM1427.4 1320.2h2.1v-44.88h-2.1zM1428.52 1320.2h2.1v-33.66h-2.1zM1429.64 1320.2h2.1v-33.66h-2.1zM1430.76 1320.2h2.1v-33.66h-2.1zM1431.88 1320.2h2.1v-44.88h-2.1zM1433 1320.2h2.1v-33.66h-2.1zM1434.12 1320.2h2.1v-33.66h-2.1zM1435.24 1320.2h2.1v-33.66h-2.1zM1436.36 1320.2h2.1v-33.66h-2.1zM1437.48 1320.2h2.1v-33.66h-2.1zM1438.6 1320.2h2.1v-33.66h-2.1zM1439.72 1320.2h2.1v-33.66h-2.1zM1440.85 1320.2h2.1v-44.88h-2.1zM1441.97 1320.2h2.1v-33.66h-2.1zM1443.09 1320.2h2.1v-33.66h-2.1zM1444.21 1320.2h2.1v-33.66h-2.1zM1445.33 1320.2h2.1v-33.66h-2.1zM1446.45 1320.2h2.1v-33.66h-2.1zM1447.57 1320.2h2.1v-33.66h-2.1zM1448.69 1320.2h2.1v-44.88h-2.1zM1449.81 1320.2h2.1v-44.88h-2.1zM1450.93 1320.2h2.1v-33.66h-2.1zM1452.05 1320.2h2.1v-33.66h-2.1zM1453.17 1320.2h2.1v-33.66h-2.1zM1454.3 1320.2h2.1v-33.66h-2.1zM1455.42 1320.2h2.1v-33.66h-2.1zM1456.54 1320.2h2.1v-33.66h-2.1zM1457.66 1320.2h2.1v-33.66h-2.1zM1458.78 1320.2h2.1v-33.66h-2.1zM1459.9 1320.2h2.1v-33.66h-2.1zM1461.02 1320.2h2.1v-33.66h-2.1zM1462.14 1320.2h2.1v-44.88h-2.1zM1463.26 1320.2h2.1v-33.66h-2.1zM1464.38 1320.2h2.1v-44.88h-2.1zM1465.5 1320.2h2.1v-33.66h-2.1zM1466.62 1320.2h2.1v-33.66h-2.1zM1467.75 1320.2h2.1v-56.1h-2.1zM1468.87 1320.2h2.1v-33.66h-2.1zM1469.99 1320.2h2.1v-33.66h-2.1zM1471.11 1320.2h2.1v-33.66h-2.1zM1472.23 1320.2h2.1v-33.66h-2.1zM1473.35 1320.2h2.1v-44.88h-2.1zM1474.47 1320.2h2.1v-33.66h-2.1zM1475.59 1320.2h2.1v-33.66h-2.1zM1476.71 1320.2h2.1v-33.66h-2.1zM1477.83 1320.2h2.1v-44.88h-2.1zM1478.95 1320.2h2.1v-33.66h-2.1zM1480.08 1320.2h2.1v-44.88h-2.1zM1481.2 1320.2h2.1v-44.88h-2.1zM1482.32 1320.2h2.1v-33.66h-2.1zM1483.44 1320.2h2.1v-33.66h-2.1zM1484.56 1320.2h2.1v-44.88h-2.1zM1485.68 1320.2h2.1v-33.66h-2.1zM1486.8 1320.2h2.1v-33.66h-2.1zM1487.92 1320.2h2.1v-33.66h-2.1zM1489.04 1320.2h2.1v-33.66h-2.1zM1490.16 1320.2h2.1v-33.66h-2.1zM1491.28 1320.2h2.1v-33.66h-2.1zM1492.4 1320.2h2.1v-33.66h-2.1zM1493.52 1320.2h2.1v-33.66h-2.1zM1494.65 1320.2h2.1v-33.66h-2.1zM1495.77 1320.2h2.1v-33.66h-2.1zM1496.89 1320.2h2.1v-33.66h-2.1zM1498.01 1320.2h2.1v-33.66h-2.1zM1499.13 1320.2h2.1v-44.88h-2.1zM1500.25 1320.2h2.1v-56.1h-2.1zM1501.37 1320.2h2.1v-33.66h-2.1zM1502.49 1320.2h2.1v-44.88h-2.1zM1503.61 1320.2h2.1v-33.66h-2.1zM1504.73 1320.2h2.1v-44.88h-2.1zM1505.85 1320.2h2.1v-44.88h-2.1zM1506.98 1320.2h2.1v-33.66h-2.1zM1508.1 1320.2h2.1v-33.66h-2.1zM1509.22 1320.2h2.1v-33.66h-2.1zM1510.34 1320.2h2.1v-33.66h-2.1zM1511.46 1320.2h2.1v-33.66h-2.1zM1512.58 1320.2h2.1v-33.66h-2.1zM1513.7 1320.2h2.1v-44.88h-2.1zM1514.82 1320.2h2.1v-33.66h-2.1zM1515.94 1320.2h2.1v-33.66h-2.1zM1517.06 1320.2h2.1v-33.66h-2.1zM1518.18 1320.2h2.1v-33.66h-2.1zM1519.3 1320.2h2.1v-33.66h-2.1zM1520.43 1320.2h2.1v-33.66h-2.1zM1521.55 1320.2h2.1v-33.66h-2.1zM1522.67 1320.2h2.1v-33.66h-2.1zM1523.79 1320.2h2.1v-33.66h-2.1zM1524.91 1320.2h2.1v-44.88h-2.1zM1526.03 1320.2h2.1v-44.88h-2.1zM1675.1 1320.2h2.1v-145.86h-2.1zM1676.22 1320.2h2.1v-100.98h-2.1zM1677.34 1320.2h2.1v-100.98h-2.1zM1678.46 1320.2h2.1v-33.66h-2.1zM1679.58 1320.2h2.1v-22.44h-2.1zM1680.7 1320.2h2.1v-22.44h-2.1zM1681.83 1320.2h2.1v-22.44h-2.1zM1682.95 1320.2h2.1v-22.44h-2.1zM1684.07 1320.2h2.1v-11.22h-2.1zM1685.19 1320.2h2.1v-11.22h-2.1zM1686.31 1320.2h2.1v-22.44h-2.1zM1687.43 1320.2h2.1v-44.88h-2.1zM1688.55 1320.2h2.1v-11.22h-2.1zM1689.67 1320.2h2.1v-22.44h-2.1zM1690.79 1320.2h2.1v-11.22h-2.1zM1691.91 1320.2h2.1v-33.66h-2.1zM1693.03 1320.2h2.1v-11.22h-2.1zM1694.15 1320.2h2.1v-11.22h-2.1zM1695.27 1320.2h2.1v-33.66h-2.1zM1696.4 1320.2h2.1v-11.22h-2.1zM1697.52 1320.2h2.1v-11.22h-2.1zM1698.64 1320.2h2.1v-22.44h-2.1zM1699.76 1320.2h2.1v-11.22h-2.1zM1700.88 1320.2h2.1v-22.44h-2.1zM1702 1320.2h2.1v-22.44h-2.1zM1703.12 1320.2h2.1v-33.66h-2.1zM1704.24 1320.2h2.1v-11.22h-2.1zM1705.36 1320.2h2.1v-11.22h-2.1zM1706.48 1320.2h2.1v-22.44h-2.1zM1707.6 1320.2h2.1v-11.22h-2.1zM1708.73 1320.2h2.1v-22.44h-2.1zM1709.85 1320.2h2.1v-22.44h-2.1zM1710.97 1320.2h2.1v-11.22h-2.1zM1712.09 1320.2h2.1v-56.1h-2.1zM1713.21 1320.2h2.1v-22.44h-2.1zM1714.33 1320.2h2.1v-11.22h-2.1zM1715.45 1320.2h2.1v-22.44h-2.1zM1716.57 1320.2h2.1v-22.44h-2.1zM1717.69 1320.2h2.1v-22.44h-2.1zM1718.81 1320.2h2.1v-22.44h-2.1zM1719.93 1320.2h2.1v-11.22h-2.1zM1721.05 1320.2h2.1v-11.22h-2.1zM1722.18 1320.2h2.1v-22.44h-2.1zM1723.3 1320.2h2.1v-11.22h-2.1zM1724.42 1320.2h2.1v-22.44h-2.1zM1725.54 1320.2h2.1v-22.44h-2.1zM1726.66 1320.2h2.1v-22.44h-2.1zM1727.78 1320.2h2.1v-11.22h-2.1zM1728.9 1320.2h2.1v-11.22h-2.1zM1730.02 1320.2h2.1v-11.22h-2.1zM1731.14 1320.2h2.1v-11.22h-2.1zM1732.26 1320.2h2.1v-22.44h-2.1zM1733.38 1320.2h2.1v-11.22h-2.1zM1734.5 1320.2h2.1v-11.22h-2.1zM1735.62 1320.2h2.1v-33.66h-2.1zM1736.75 1320.2h2.1v-22.44h-2.1zM1737.87 1320.2h2.1v-11.22h-2.1zM1738.99 1320.2h2.1v-22.44h-2.1zM1740.11 1320.2h2.1v-44.88h-2.1zM1741.23 1320.2h2.1v-11.22h-2.1zM1742.35 1320.2h2.1v-11.22h-2.1zM1743.47 1320.2h2.1v-22.44h-2.1zM1744.59 1320.2h2.1v-11.22h-2.1zM1745.71 1320.2h2.1v-22.44h-2.1zM1746.83 1320.2h2.1v-22.44h-2.1zM1747.95 1320.2h2.1v-11.22h-2.1zM1749.08 1320.2h2.1v-22.44h-2.1zM1750.2 1320.2h2.1v-22.44h-2.1zM1751.32 1320.2h2.1v-22.44h-2.1zM1752.44 1320.2h2.1v-11.22h-2.1zM1753.56 1320.2h2.1v-33.66h-2.1zM1754.68 1320.2h2.1v-11.22h-2.1zM1755.8 1320.2h2.1v-22.44h-2.1zM1756.92 1320.2h2.1v-11.22h-2.1zM1758.04 1320.2h2.1v-56.1h-2.1zM1759.16 1320.2h2.1v-11.22h-2.1zM1760.28 1320.2h2.1v-33.66h-2.1zM1761.4 1320.2h2.1v-11.22h-2.1zM1762.53 1320.2h2.1v-22.44h-2.1zM1763.65 1320.2h2.1v-11.22h-2.1zM1764.77 1320.2h2.1v-33.66h-2.1zM1765.89 1320.2h2.1v-44.88h-2.1zM1767.01 1320.2h2.1v-11.22h-2.1zM1768.13 1320.2h2.1v-22.44h-2.1zM1769.25 1320.2h2.1v-11.22h-2.1zM1770.37 1320.2h2.1v-22.44h-2.1zM1771.49 1320.2h2.1v-22.44h-2.1zM1772.61 1320.2h2.1v-22.44h-2.1zM1773.73 1320.2h2.1v-11.22h-2.1zM1774.85 1320.2h2.1v-22.44h-2.1zM1775.97 1320.2h2.1v-11.22h-2.1zM1777.1 1320.2h2.1v-22.44h-2.1zM1778.22 1320.2h2.1v-22.44h-2.1zM1779.34 1320.2h2.1v-22.44h-2.1zM1780.46 1320.2h2.1v-33.66h-2.1zM1781.58 1320.2h2.1v-33.66h-2.1zM1782.7 1320.2h2.1v-22.44h-2.1zM1783.82 1320.2h2.1v-22.44h-2.1zM1784.94 1320.2h2.1v-22.44h-2.1zM1786.06 1320.2h2.1v-11.22h-2.1zM1787.18 1320.2h2.1v-22.44h-2.1zM1788.3 1320.2h2.1v-22.44h-2.1zM1789.42 1320.2h2.1v-22.44h-2.1zM1790.55 1320.2h2.1v-11.22h-2.1zM1791.67 1320.2h2.1v-22.44h-2.1zM1792.79 1320.2h2.1v-33.66h-2.1zM1793.91 1320.2h2.1v-22.44h-2.1zM1795.03 1320.2h2.1v-22.44h-2.1zM1796.15 1320.2h2.1v-11.22h-2.1zM1797.27 1320.2h2.1v-33.66h-2.1zM1798.39 1320.2h2.1v-22.44h-2.1zM1799.51 1320.2h2.1v-22.44h-2.1zM1800.63 1320.2h2.1v-33.66h-2.1zM1801.75 1320.2h2.1v-11.22h-2.1zM1802.88 1320.2h2.1v-22.44h-2.1zM1804 1320.2h2.1v-22.44h-2.1zM1805.12 1320.2h2.1v-22.44h-2.1zM1806.24 1320.2h2.1v-22.44h-2.1zM1807.36 1320.2h2.1v-22.44h-2.1zM1808.48 1320.2h2.1v-22.44h-2.1zM1809.6 1320.2h2.1v-22.44h-2.1zM1810.72 1320.2h2.1v-22.44h-2.1zM1811.84 1320.2h2.1v-22.44h-2.1zM1812.96 1320.2h2.1v-22.44h-2.1zM1814.08 1320.2h2.1v-22.44h-2.1zM1815.2 1320.2h2.1v-11.22h-2.1zM1816.33 1320.2h2.1v-33.66h-2.1zM1817.45 1320.2h2.1v-44.88h-2.1zM1818.57 1320.2h2.1v-22.44h-2.1zM1819.69 1320.2h2.1v-44.88h-2.1zM1820.81 1320.2h2.1v-22.44h-2.1zM1821.93 1320.2h2.1v-56.1h-2.1zM1823.05 1320.2h2.1v-33.66h-2.1zM1824.17 1320.2h2.1v-22.44h-2.1zM1825.29 1320.2h2.1v-33.66h-2.1zM1826.41 1320.2h2.1v-22.44h-2.1zM1827.53 1320.2h2.1v-22.44h-2.1zM1828.65 1320.2h2.1v-22.44h-2.1zM1829.78 1320.2h2.1v-22.44h-2.1zM1830.9 1320.2h2.1v-22.44h-2.1zM1832.02 1320.2h2.1v-22.44h-2.1zM1833.14 1320.2h2.1v-44.88h-2.1zM1834.26 1320.2h2.1v-44.88h-2.1zM1835.38 1320.2h2.1v-22.44h-2.1zM1836.5 1320.2h2.1v-22.44h-2.1zM1837.62 1320.2h2.1v-22.44h-2.1zM1838.74 1320.2h2.1v-11.22h-2.1zM1839.86 1320.2h2.1v-11.22h-2.1zM1840.98 1320.2h2.1v-22.44h-2.1zM1842.1 1320.2h2.1v-22.44h-2.1zM1843.23 1320.2h2.1v-22.44h-2.1zM1844.35 1320.2h2.1v-22.44h-2.1zM1845.47 1320.2h2.1v-22.44h-2.1zM1846.59 1320.2h2.1v-11.22h-2.1zM1847.71 1320.2h2.1v-22.44h-2.1zM1848.83 1320.2h2.1v-22.44h-2.1zM1997.9 1320.2h2.1v-112.2h-2.1zM1999.02 1320.2h2.1v-112.2h-2.1zM2000.14 1320.2h2.1v-89.76h-2.1zM2001.26 1320.2h2.1v-56.1h-2.1zM2002.38 1320.2h2.1v-33.66h-2.1zM2003.5 1320.2h2.1v-11.22h-2.1zM2004.63 1320.2h2.1v-11.22h-2.1zM2005.75 1320.2h2.1v-11.22h-2.1zM2006.87 1320.2h2.1v-11.22h-2.1zM2007.99 1320.2h2.1v-11.22h-2.1zM2009.11 1320.2h2.1v-11.22h-2.1zM2010.23 1320.2h2.1v-11.22h-2.1zM2011.35 1320.2h2.1v-22.44h-2.1zM2012.47 1320.2h2.1v-11.22h-2.1zM2013.59 1320.2h2.1v-33.66h-2.1zM2014.71 1320.2h2.1v-11.22h-2.1zM2015.83 1320.2h2.1v-44.88h-2.1zM2016.95 1320.2h2.1v-11.22h-2.1zM2018.08 1320.2h2.1v-11.22h-2.1zM2019.2 1320.2h2.1v-11.22h-2.1zM2020.32 1320.2h2.1v-11.22h-2.1zM2021.44 1320.2h2.1v-11.22h-2.1zM2022.56 1320.2h2.1v-11.22h-2.1zM2023.68 1320.2h2.1v-11.22h-2.1zM2024.8 1320.2h2.1v-11.22h-2.1zM2025.92 1320.2h2.1v-11.22h-2.1zM2027.04 1320.2h2.1v-11.22h-2.1zM2028.16 1320.2h2.1v-11.22h-2.1zM2029.28 1320.2h2.1v-11.22h-2.1zM2030.4 1320.2h2.1v-56.1h-2.1zM2031.53 1320.2h2.1v-56.1h-2.1zM2032.65 1320.2h2.1v-56.1h-2.1zM2033.77 1320.2h2.1v-11.22h-2.1zM2034.89 1320.2h2.1v-11.22h-2.1zM2036.01 1320.2h2.1v-11.22h-2.1zM2037.13 1320.2h2.1v-11.22h-2.1zM2038.25 1320.2h2.1v-33.66h-2.1zM2039.37 1320.2h2.1v-11.22h-2.1zM2040.49 1320.2h2.1v-11.22h-2.1zM2041.61 1320.2h2.1v-11.22h-2.1zM2042.73 1320.2h2.1v-11.22h-2.1zM2043.85 1320.2h2.1v-11.22h-2.1zM2044.98 1320.2h2.1v-11.22h-2.1zM2046.1 1320.2h2.1v-11.22h-2.1zM2047.22 1320.2h2.1v-11.22h-2.1zM2048.34 1320.2h2.1v-11.22h-2.1zM2049.46 1320.2h2.1v-11.22h-2.1zM2050.58 1320.2h2.1v-11.22h-2.1zM2051.7 1320.2h2.1v-11.22h-2.1zM2052.82 1320.2h2.1v-11.22h-2.1zM2053.94 1320.2h2.1v-11.22h-2.1zM2055.06 1320.2h2.1v-11.22h-2.1zM2056.18 1320.2h2.1v-22.44h-2.1zM2057.3 1320.2h2.1v-33.66h-2.1zM2058.42 1320.2h2.1v-11.22h-2.1zM2059.55 1320.2h2.1v-11.22h-2.1zM2060.67 1320.2h2.1v-11.22h-2.1zM2061.79 1320.2h2.1v-11.22h-2.1zM2062.91 1320.2h2.1v-11.22h-2.1zM2064.03 1320.2h2.1v-11.22h-2.1zM2065.15 1320.2h2.1v-33.66h-2.1zM2066.27 1320.2h2.1v-22.44h-2.1zM2067.39 1320.2h2.1v-33.66h-2.1zM2068.51 1320.2h2.1v-11.22h-2.1zM2069.63 1320.2h2.1v-11.22h-2.1zM2070.75 1320.2h2.1v-11.22h-2.1zM2071.88 1320.2h2.1v-11.22h-2.1zM2073 1320.2h2.1v-11.22h-2.1zM2074.12 1320.2h2.1v-11.22h-2.1zM2075.24 1320.2h2.1v-22.44h-2.1zM2076.36 1320.2h2.1v-11.22h-2.1zM2077.48 1320.2h2.1v-44.88h-2.1zM2078.6 1320.2h2.1v-11.22h-2.1zM2079.72 1320.2h2.1v-44.88h-2.1zM2080.84 1320.2h2.1v-11.22h-2.1zM2081.96 1320.2h2.1v-11.22h-2.1zM2083.08 1320.2h2.1v-22.44h-2.1zM2084.2 1320.2h2.1v-11.22h-2.1zM2085.33 1320.2h2.1v-11.22h-2.1zM2086.45 1320.2h2.1v-11.22h-2.1zM2087.57 1320.2h2.1v-11.22h-2.1zM2088.69 1320.2h2.1v-11.22h-2.1zM2089.81 1320.2h2.1v-11.22h-2.1zM2090.93 1320.2h2.1v-11.22h-2.1zM2092.05 1320.2h2.1v-22.44h-2.1zM2094.29 1320.2h2.1v-11.22h-2.1zM2095.41 1320.2h2.1v-22.44h-2.1zM2097.65 1320.2h2.1v-44.88h-2.1zM2098.77 1320.2h2.1v-22.44h-2.1zM2099.9 1320.2h2.1v-22.44h-2.1zM2101.02 1320.2h2.1v-11.22h-2.1zM2102.14 1320.2h2.1v-11.22h-2.1zM2103.26 1320.2h2.1v-11.22h-2.1zM2104.38 1320.2h2.1v-22.44h-2.1zM2106.62 1320.2h2.1v-22.44h-2.1zM2107.74 1320.2h2.1v-11.22h-2.1zM2108.86 1320.2h2.1v-11.22h-2.1zM2109.98 1320.2h2.1v-11.22h-2.1zM2111.1 1320.2h2.1v-11.22h-2.1zM2112.22 1320.2h2.1v-11.22h-2.1zM2113.35 1320.2h2.1v-22.44h-2.1zM2114.47 1320.2h2.1v-11.22h-2.1zM2115.59 1320.2h2.1v-11.22h-2.1zM2116.71 1320.2h2.1v-11.22h-2.1zM2117.83 1320.2h2.1v-44.88h-2.1zM2118.95 1320.2h2.1v-11.22h-2.1zM2120.07 1320.2h2.1v-11.22h-2.1zM2121.19 1320.2h2.1v-22.44h-2.1zM2122.31 1320.2h2.1v-11.22h-2.1zM2123.43 1320.2h2.1v-22.44h-2.1zM2124.55 1320.2h2.1v-22.44h-2.1zM2125.68 1320.2h2.1v-11.22h-2.1zM2126.8 1320.2h2.1v-11.22h-2.1zM2127.92 1320.2h2.1v-22.44h-2.1zM2129.04 1320.2h2.1v-11.22h-2.1zM2130.16 1320.2h2.1v-11.22h-2.1zM2131.28 1320.2h2.1v-11.22h-2.1zM2132.4 1320.2h2.1v-22.44h-2.1zM2133.52 1320.2h2.1v-11.22h-2.1zM2134.64 1320.2h2.1v-11.22h-2.1zM2135.76 1320.2h2.1v-22.44h-2.1zM2136.88 1320.2h2.1v-11.22h-2.1zM2138 1320.2h2.1v-56.1h-2.1zM2139.12 1320.2h2.1v-11.22h-2.1zM2140.25 1320.2h2.1v-33.66h-2.1zM2141.37 1320.2h2.1v-11.22h-2.1zM2142.49 1320.2h2.1v-11.22h-2.1zM2143.61 1320.2h2.1v-22.44h-2.1zM2144.73 1320.2h2.1v-11.22h-2.1zM2145.85 1320.2h2.1v-22.44h-2.1zM2146.97 1320.2h2.1v-11.22h-2.1zM2148.09 1320.2h2.1v-22.44h-2.1zM2149.21 1320.2h2.1v-22.44h-2.1zM2150.33 1320.2h2.1v-11.22h-2.1zM2151.45 1320.2h2.1v-22.44h-2.1zM2153.7 1320.2h2.1v-22.44h-2.1zM2154.82 1320.2h2.1v-11.22h-2.1zM2155.94 1320.2h2.1v-22.44h-2.1zM2157.06 1320.2h2.1v-22.44h-2.1zM2158.18 1320.2h2.1v-22.44h-2.1zM2159.3 1320.2h2.1v-33.66h-2.1zM2160.42 1320.2h2.1v-11.22h-2.1zM2161.54 1320.2h2.1v-11.22h-2.1zM2162.66 1320.2h2.1v-22.44h-2.1zM2163.78 1320.2h2.1v-11.22h-2.1zM2164.9 1320.2h2.1v-22.44h-2.1zM2166.03 1320.2h2.1v-11.22h-2.1zM2167.15 1320.2h2.1v-11.22h-2.1zM2168.27 1320.2h2.1v-22.44h-2.1zM2169.39 1320.2h2.1v-11.22h-2.1zM2170.51 1320.2h2.1v-22.44h-2.1zM2171.63 1320.2h2.1v-33.66h-2.1zM2320.7 1320.2h2.1v-134.64h-2.1zM2321.82 1320.2h2.1v-112.2h-2.1zM2322.94 1320.2h2.1v-112.2h-2.1zM2324.06 1320.2h2.1v-123.42h-2.1zM2325.18 1320.2h2.1v-89.76h-2.1zM2327.43 1320.2h2.1v-44.88h-2.1zM2328.55 1320.2h2.1v-22.44h-2.1zM2329.67 1320.2h2.1v-22.44h-2.1zM2331.91 1320.2h2.1v-11.22h-2.1zM2333.03 1320.2h2.1v-11.22h-2.1zM2335.27 1320.2h2.1v-11.22h-2.1zM2336.39 1320.2h2.1v-11.22h-2.1zM2337.51 1320.2h2.1v-11.22h-2.1zM2338.63 1320.2h2.1v-22.44h-2.1zM2339.75 1320.2h2.1v-33.66h-2.1zM2342 1320.2h2.1v-11.22h-2.1zM2343.12 1320.2h2.1v-11.22h-2.1zM2345.36 1320.2h2.1v-11.22h-2.1zM2346.48 1320.2h2.1v-11.22h-2.1zM2348.72 1320.2h2.1v-11.22h-2.1zM2349.84 1320.2h2.1v-11.22h-2.1zM2350.96 1320.2h2.1v-11.22h-2.1zM2353.2 1320.2h2.1v-11.22h-2.1zM2354.33 1320.2h2.1v-11.22h-2.1zM2355.45 1320.2h2.1v-11.22h-2.1zM2356.57 1320.2h2.1v-11.22h-2.1zM2357.69 1320.2h2.1v-22.44h-2.1zM2359.93 1320.2h2.1v-44.88h-2.1zM2362.17 1320.2h2.1v-11.22h-2.1zM2363.29 1320.2h2.1v-11.22h-2.1zM2364.41 1320.2h2.1v-11.22h-2.1zM2366.65 1320.2h2.1v-11.22h-2.1zM2367.78 1320.2h2.1v-11.22h-2.1zM2368.9 1320.2h2.1v-22.44h-2.1zM2371.14 1320.2h2.1v-11.22h-2.1zM2372.26 1320.2h2.1v-11.22h-2.1zM2373.38 1320.2h2.1v-11.22h-2.1zM2375.62 1320.2h2.1v-11.22h-2.1zM2376.74 1320.2h2.1v-11.22h-2.1zM2378.98 1320.2h2.1v-11.22h-2.1zM2380.1 1320.2h2.1v-44.88h-2.1zM2381.22 1320.2h2.1v-11.22h-2.1zM2383.47 1320.2h2.1v-11.22h-2.1zM2384.59 1320.2h2.1v-11.22h-2.1zM2385.71 1320.2h2.1v-11.22h-2.1zM2386.83 1320.2h2.1v-11.22h-2.1zM2389.07 1320.2h2.1v-11.22h-2.1zM2390.19 1320.2h2.1v-22.44h-2.1zM2392.43 1320.2h2.1v-11.22h-2.1zM2393.55 1320.2h2.1v-22.44h-2.1zM2394.68 1320.2h2.1v-11.22h-2.1zM2395.8 1320.2h2.1v-11.22h-2.1zM2396.92 1320.2h2.1v-11.22h-2.1zM2398.04 1320.2h2.1v-11.22h-2.1zM2399.16 1320.2h2.1v-33.66h-2.1zM2400.28 1320.2h2.1v-22.44h-2.1zM2401.4 1320.2h2.1v-11.22h-2.1zM2403.64 1320.2h2.1v-22.44h-2.1zM2405.88 1320.2h2.1v-22.44h-2.1zM2407 1320.2h2.1v-11.22h-2.1zM2409.25 1320.2h2.1v-22.44h-2.1zM2410.37 1320.2h2.1v-11.22h-2.1zM2411.49 1320.2h2.1v-11.22h-2.1zM2412.61 1320.2h2.1v-11.22h-2.1z" fill="#a0eec4"/><path d="M235.95 1320.2h2.1v-33.66h-2.1zM237.07 1320.2h2.1v-11.22h-2.1zM238.19 1320.2h2.1v-11.22h-2.1zM239.31 1320.2h2.1v-22.44h-2.1zM240.43 1320.2h2.1v-11.22h-2.1zM241.55 1320.2h2.1v-11.22h-2.1zM242.68 1320.2h2.1v-22.44h-2.1zM243.8 1320.2h2.1v-11.22h-2.1zM244.92 1320.2h2.1v-11.22h-2.1zM246.04 1320.2h2.1v-89.76h-2.1zM247.16 1320.2h2.1v-302.94h-2.1zM248.28 1320.2h2.1v-302.94h-2.1zM249.4 1320.2h2.1v-426.36h-2.1zM250.52 1320.2h2.1v-415.14h-2.1zM251.64 1320.2h2.1v-426.36h-2.1zM252.76 1320.2h2.1v-403.92h-2.1zM253.88 1320.2h2.1v-426.36h-2.1zM255 1320.2h2.1v-448.8h-2.1zM256.12 1320.2h2.1v-426.36h-2.1zM257.25 1320.2h2.1v-415.14h-2.1zM258.37 1320.2h2.1v-336.6h-2.1zM259.49 1320.2h2.1v-145.86h-2.1zM260.61 1320.2h2.1v-145.86h-2.1zM261.73 1320.2h2.1v-145.86h-2.1zM262.85 1320.2h2.1v-145.86h-2.1zM263.97 1320.2h2.1v-134.64h-2.1zM265.09 1320.2h2.1v-168.3h-2.1zM266.21 1320.2h2.1v-179.52h-2.1zM267.33 1320.2h2.1v-134.64h-2.1zM268.45 1320.2h2.1v-157.08h-2.1zM269.57 1320.2h2.1v-179.52h-2.1zM270.7 1320.2h2.1v-190.74h-2.1zM271.82 1320.2h2.1v-179.52h-2.1zM272.94 1320.2h2.1v-269.28h-2.1zM274.06 1320.2h2.1v-269.28h-2.1zM275.18 1320.2h2.1v-224.4h-2.1zM276.3 1320.2h2.1v-179.52h-2.1zM277.42 1320.2h2.1v-190.74h-2.1zM278.54 1320.2h2.1v-269.28h-2.1zM279.66 1320.2h2.1v-403.92h-2.1zM280.78 1320.2h2.1v-201.96h-2.1zM281.9 1320.2h2.1v-213.18h-2.1zM283.02 1320.2h2.1v-291.72h-2.1zM284.15 1320.2h2.1v-258.06h-2.1zM285.27 1320.2h2.1v-258.06h-2.1zM286.39 1320.2h2.1v-258.06h-2.1zM287.51 1320.2h2.1v-213.18h-2.1zM288.63 1320.2h2.1v-269.28h-2.1zM289.75 1320.2h2.1v-224.4h-2.1zM290.87 1320.2h2.1v-269.28h-2.1zM291.99 1320.2h2.1v-258.06h-2.1zM293.11 1320.2h2.1v-235.62h-2.1zM294.23 1320.2h2.1v-213.18h-2.1zM295.35 1320.2h2.1v-291.72h-2.1zM296.47 1320.2h2.1v-359.04h-2.1zM297.6 1320.2h2.1v-258.06h-2.1zM298.72 1320.2h2.1v-224.4h-2.1zM299.84 1320.2h2.1v-190.74h-2.1zM300.96 1320.2h2.1v-190.74h-2.1zM302.08 1320.2h2.1v-168.3h-2.1zM303.2 1320.2h2.1v-235.62h-2.1zM304.32 1320.2h2.1v-213.18h-2.1zM305.44 1320.2h2.1v-179.52h-2.1zM306.56 1320.2h2.1v-190.74h-2.1zM307.68 1320.2h2.1v-145.86h-2.1zM308.8 1320.2h2.1v-213.18h-2.1zM309.93 1320.2h2.1v-168.3h-2.1zM311.05 1320.2h2.1v-157.08h-2.1zM312.17 1320.2h2.1v-157.08h-2.1zM313.29 1320.2h2.1v-201.96h-2.1zM314.41 1320.2h2.1v-201.96h-2.1zM315.53 1320.2h2.1v-179.52h-2.1zM316.65 1320.2h2.1v-235.62h-2.1zM317.77 1320.2h2.1v-201.96h-2.1zM318.89 1320.2h2.1v-190.74h-2.1zM320.01 1320.2h2.1v-134.64h-2.1zM321.13 1320.2h2.1v-145.86h-2.1zM322.25 1320.2h2.1v-145.86h-2.1zM323.38 1320.2h2.1v-157.08h-2.1zM324.5 1320.2h2.1v-145.86h-2.1zM325.62 1320.2h2.1v-179.52h-2.1zM326.74 1320.2h2.1v-134.64h-2.1zM327.86 1320.2h2.1v-134.64h-2.1zM328.98 1320.2h2.1v-157.08h-2.1zM330.1 1320.2h2.1v-145.86h-2.1zM331.22 1320.2h2.1v-134.64h-2.1zM332.34 1320.2h2.1v-426.36h-2.1zM333.46 1320.2h2.1v-123.42h-2.1zM334.58 1320.2h2.1v-437.58h-2.1zM335.7 1320.2h2.1v-370.26h-2.1zM336.82 1320.2h2.1v-179.52h-2.1zM337.95 1320.2h2.1v-201.96h-2.1zM339.07 1320.2h2.1v-134.64h-2.1zM340.19 1320.2h2.1v-145.86h-2.1zM341.31 1320.2h2.1v-325.38h-2.1zM342.43 1320.2h2.1v-145.86h-2.1zM343.55 1320.2h2.1v-269.28h-2.1zM344.67 1320.2h2.1v-190.74h-2.1zM345.79 1320.2h2.1v-134.64h-2.1zM346.91 1320.2h2.1v-134.64h-2.1zM348.03 1320.2h2.1v-123.42h-2.1zM349.15 1320.2h2.1v-157.08h-2.1zM350.28 1320.2h2.1v-134.64h-2.1zM351.4 1320.2h2.1v-134.64h-2.1zM352.52 1320.2h2.1v-134.64h-2.1zM353.64 1320.2h2.1v-145.86h-2.1zM354.76 1320.2h2.1v-157.08h-2.1zM355.88 1320.2h2.1v-112.2h-2.1zM357 1320.2h2.1v-145.86h-2.1zM358.12 1320.2h2.1v-145.86h-2.1zM359.24 1320.2h2.1v-134.64h-2.1zM360.36 1320.2h2.1v-157.08h-2.1zM361.48 1320.2h2.1v-134.64h-2.1zM362.6 1320.2h2.1v-134.64h-2.1zM363.73 1320.2h2.1v-145.86h-2.1zM364.85 1320.2h2.1v-179.52h-2.1zM365.97 1320.2h2.1v-201.96h-2.1zM367.09 1320.2h2.1v-190.74h-2.1zM368.21 1320.2h2.1v-190.74h-2.1zM369.33 1320.2h2.1v-190.74h-2.1zM370.45 1320.2h2.1v-201.96h-2.1zM371.57 1320.2h2.1v-190.74h-2.1zM372.69 1320.2h2.1v-201.96h-2.1zM373.81 1320.2h2.1v-201.96h-2.1zM374.93 1320.2h2.1v-213.18h-2.1zM376.05 1320.2h2.1v-168.3h-2.1zM377.18 1320.2h2.1v-179.52h-2.1zM378.3 1320.2h2.1v-179.52h-2.1zM379.42 1320.2h2.1v-145.86h-2.1zM380.54 1320.2h2.1v-145.86h-2.1zM381.66 1320.2h2.1v-145.86h-2.1zM382.78 1320.2h2.1v-145.86h-2.1zM1204.35 1320.2h2.1v-11.22h-2.1zM1205.47 1320.2h2.1v-11.22h-2.1zM1206.59 1320.2h2.1v-11.22h-2.1zM1207.71 1320.2h2.1v-11.22h-2.1zM1208.83 1320.2h2.1v-22.44h-2.1zM1209.95 1320.2h2.1v-11.22h-2.1zM1211.08 1320.2h2.1v-33.66h-2.1zM1212.2 1320.2h2.1v-11.22h-2.1zM1213.32 1320.2h2.1v-44.88h-2.1zM1214.44 1320.2h2.1v-22.44h-2.1zM1215.56 1320.2h2.1v-22.44h-2.1zM1216.68 1320.2h2.1v-22.44h-2.1zM1217.8 1320.2h2.1v-33.66h-2.1zM1218.92 1320.2h2.1v-134.64h-2.1zM1220.04 1320.2h2.1v-134.64h-2.1zM1221.16 1320.2h2.1v-179.52h-2.1zM1222.28 1320.2h2.1v-179.52h-2.1zM1223.4 1320.2h2.1v-145.86h-2.1zM1224.53 1320.2h2.1v-168.3h-2.1zM1225.65 1320.2h2.1v-157.08h-2.1zM1226.77 1320.2h2.1v-403.92h-2.1zM1227.89 1320.2h2.1v-415.14h-2.1zM1229.01 1320.2h2.1v-448.8h-2.1zM1230.13 1320.2h2.1v-415.14h-2.1zM1231.25 1320.2h2.1v-381.48h-2.1zM1232.37 1320.2h2.1v-381.48h-2.1zM1233.49 1320.2h2.1v-448.8h-2.1zM1234.61 1320.2h2.1v-392.7h-2.1zM1235.73 1320.2h2.1v-336.6h-2.1zM1236.85 1320.2h2.1v-392.7h-2.1zM1237.97 1320.2h2.1v-269.28h-2.1zM1239.1 1320.2h2.1v-258.06h-2.1zM1240.22 1320.2h2.1v-213.18h-2.1zM1241.34 1320.2h2.1v-269.28h-2.1zM1242.46 1320.2h2.1v-224.4h-2.1zM1243.58 1320.2h2.1v-235.62h-2.1zM1244.7 1320.2h2.1v-269.28h-2.1zM1245.82 1320.2h2.1v-157.08h-2.1zM1246.94 1320.2h2.1v-157.08h-2.1zM1248.06 1320.2h2.1v-168.3h-2.1zM1249.18 1320.2h2.1v-157.08h-2.1zM1250.3 1320.2h2.1v-168.3h-2.1zM1251.43 1320.2h2.1v-157.08h-2.1zM1252.55 1320.2h2.1v-145.86h-2.1zM1253.67 1320.2h2.1v-145.86h-2.1zM1254.79 1320.2h2.1v-157.08h-2.1zM1255.91 1320.2h2.1v-168.3h-2.1zM1257.03 1320.2h2.1v-134.64h-2.1zM1258.15 1320.2h2.1v-157.08h-2.1zM1259.27 1320.2h2.1v-437.58h-2.1zM1260.39 1320.2h2.1v-179.52h-2.1zM1261.51 1320.2h2.1v-179.52h-2.1zM1262.63 1320.2h2.1v-201.96h-2.1zM1263.75 1320.2h2.1v-179.52h-2.1zM1264.88 1320.2h2.1v-168.3h-2.1zM1266 1320.2h2.1v-179.52h-2.1zM1267.12 1320.2h2.1v-190.74h-2.1zM1268.24 1320.2h2.1v-190.74h-2.1zM1269.36 1320.2h2.1v-168.3h-2.1zM1270.48 1320.2h2.1v-157.08h-2.1zM1271.6 1320.2h2.1v-145.86h-2.1zM1272.72 1320.2h2.1v-168.3h-2.1zM1273.84 1320.2h2.1v-134.64h-2.1zM1274.96 1320.2h2.1v-246.84h-2.1zM1276.08 1320.2h2.1v-213.18h-2.1zM1277.2 1320.2h2.1v-190.74h-2.1zM1278.33 1320.2h2.1v-235.62h-2.1zM1279.45 1320.2h2.1v-201.96h-2.1zM1280.57 1320.2h2.1v-190.74h-2.1zM1281.69 1320.2h2.1v-201.96h-2.1zM1282.81 1320.2h2.1v-224.4h-2.1zM1283.93 1320.2h2.1v-190.74h-2.1zM1285.05 1320.2h2.1v-190.74h-2.1zM1286.17 1320.2h2.1v-190.74h-2.1zM1287.29 1320.2h2.1v-213.18h-2.1zM1288.41 1320.2h2.1v-235.62h-2.1zM1289.53 1320.2h2.1v-179.52h-2.1zM1290.65 1320.2h2.1v-168.3h-2.1zM1291.78 1320.2h2.1v-179.52h-2.1zM1292.9 1320.2h2.1v-179.52h-2.1zM1294.02 1320.2h2.1v-179.52h-2.1zM1295.14 1320.2h2.1v-426.36h-2.1zM1296.26 1320.2h2.1v-426.36h-2.1zM1297.38 1320.2h2.1v-201.96h-2.1zM1298.5 1320.2h2.1v-235.62h-2.1zM1299.62 1320.2h2.1v-392.7h-2.1zM1300.74 1320.2h2.1v-246.84h-2.1zM1301.86 1320.2h2.1v-224.4h-2.1zM1302.98 1320.2h2.1v-224.4h-2.1zM1304.1 1320.2h2.1v-235.62h-2.1zM1305.23 1320.2h2.1v-437.58h-2.1zM1306.35 1320.2h2.1v-426.36h-2.1zM1307.47 1320.2h2.1v-347.82h-2.1zM1308.59 1320.2h2.1v-235.62h-2.1zM1309.71 1320.2h2.1v-235.62h-2.1zM1310.83 1320.2h2.1v-179.52h-2.1zM1311.95 1320.2h2.1v-190.74h-2.1zM1313.07 1320.2h2.1v-190.74h-2.1zM1314.19 1320.2h2.1v-179.52h-2.1zM1315.31 1320.2h2.1v-179.52h-2.1zM1316.43 1320.2h2.1v-179.52h-2.1zM1317.55 1320.2h2.1v-179.52h-2.1zM1318.67 1320.2h2.1v-179.52h-2.1zM1319.8 1320.2h2.1v-168.3h-2.1zM1320.92 1320.2h2.1v-246.84h-2.1zM1322.04 1320.2h2.1v-157.08h-2.1zM1323.16 1320.2h2.1v-168.3h-2.1zM1324.28 1320.2h2.1v-190.74h-2.1zM1325.4 1320.2h2.1v-246.84h-2.1zM1326.52 1320.2h2.1v-201.96h-2.1zM1327.64 1320.2h2.1v-168.3h-2.1zM1328.76 1320.2h2.1v-168.3h-2.1zM1329.88 1320.2h2.1v-224.4h-2.1zM1331 1320.2h2.1v-168.3h-2.1zM1332.12 1320.2h2.1v-179.52h-2.1zM1333.25 1320.2h2.1v-168.3h-2.1zM1334.37 1320.2h2.1v-168.3h-2.1zM1335.49 1320.2h2.1v-235.62h-2.1zM1336.61 1320.2h2.1v-157.08h-2.1zM1337.73 1320.2h2.1v-179.52h-2.1zM1338.85 1320.2h2.1v-145.86h-2.1zM1339.97 1320.2h2.1v-134.64h-2.1zM1341.09 1320.2h2.1v-145.86h-2.1zM1342.21 1320.2h2.1v-157.08h-2.1zM1343.33 1320.2h2.1v-134.64h-2.1zM1344.45 1320.2h2.1v-134.64h-2.1zM1345.58 1320.2h2.1v-179.52h-2.1zM1346.7 1320.2h2.1v-145.86h-2.1zM1347.82 1320.2h2.1v-168.3h-2.1zM1348.94 1320.2h2.1v-134.64h-2.1zM1350.06 1320.2h2.1v-134.64h-2.1zM1351.18 1320.2h2.1v-157.08h-2.1zM1527.15 1320.2h2.1v-44.88h-2.1zM1528.27 1320.2h2.1v-33.66h-2.1zM1529.39 1320.2h2.1v-33.66h-2.1zM1530.51 1320.2h2.1v-33.66h-2.1zM1531.63 1320.2h2.1v-33.66h-2.1zM1532.75 1320.2h2.1v-33.66h-2.1zM1533.88 1320.2h2.1v-44.88h-2.1zM1535 1320.2h2.1v-44.88h-2.1zM1536.12 1320.2h2.1v-33.66h-2.1zM1537.24 1320.2h2.1v-33.66h-2.1zM1538.36 1320.2h2.1v-33.66h-2.1zM1539.48 1320.2h2.1v-33.66h-2.1zM1540.6 1320.2h2.1v-33.66h-2.1zM1541.72 1320.2h2.1v-33.66h-2.1zM1542.84 1320.2h2.1v-33.66h-2.1zM1543.96 1320.2h2.1v-100.98h-2.1zM1545.08 1320.2h2.1v-201.96h-2.1zM1546.2 1320.2h2.1v-347.82h-2.1zM1547.33 1320.2h2.1v-493.68h-2.1zM1548.45 1320.2h2.1v-179.52h-2.1zM1549.57 1320.2h2.1v-179.52h-2.1zM1550.69 1320.2h2.1v-179.52h-2.1zM1551.81 1320.2h2.1v-179.52h-2.1zM1552.93 1320.2h2.1v-325.38h-2.1zM1554.05 1320.2h2.1v-168.3h-2.1zM1555.17 1320.2h2.1v-448.8h-2.1zM1556.29 1320.2h2.1v-403.92h-2.1zM1557.41 1320.2h2.1v-224.4h-2.1zM1558.53 1320.2h2.1v-213.18h-2.1zM1559.65 1320.2h2.1v-168.3h-2.1zM1560.78 1320.2h2.1v-168.3h-2.1zM1561.9 1320.2h2.1v-179.52h-2.1zM1563.02 1320.2h2.1v-168.3h-2.1zM1564.14 1320.2h2.1v-168.3h-2.1zM1565.26 1320.2h2.1v-157.08h-2.1zM1566.38 1320.2h2.1v-201.96h-2.1zM1567.5 1320.2h2.1v-347.82h-2.1zM1568.62 1320.2h2.1v-201.96h-2.1zM1569.74 1320.2h2.1v-258.06h-2.1zM1570.86 1320.2h2.1v-213.18h-2.1zM1571.98 1320.2h2.1v-246.84h-2.1zM1573.1 1320.2h2.1v-201.96h-2.1zM1574.22 1320.2h2.1v-381.48h-2.1zM1575.35 1320.2h2.1v-201.96h-2.1zM1576.47 1320.2h2.1v-392.7h-2.1zM1577.59 1320.2h2.1v-460.02h-2.1zM1578.71 1320.2h2.1v-269.28h-2.1zM1579.83 1320.2h2.1v-201.96h-2.1zM1580.95 1320.2h2.1v-246.84h-2.1zM1582.07 1320.2h2.1v-190.74h-2.1zM1583.19 1320.2h2.1v-179.52h-2.1zM1584.31 1320.2h2.1v-213.18h-2.1zM1585.43 1320.2h2.1v-157.08h-2.1zM1586.55 1320.2h2.1v-190.74h-2.1zM1587.67 1320.2h2.1v-157.08h-2.1zM1588.8 1320.2h2.1v-157.08h-2.1zM1589.92 1320.2h2.1v-179.52h-2.1zM1591.04 1320.2h2.1v-258.06h-2.1zM1592.16 1320.2h2.1v-190.74h-2.1zM1593.28 1320.2h2.1v-168.3h-2.1zM1594.4 1320.2h2.1v-302.94h-2.1zM1595.52 1320.2h2.1v-157.08h-2.1zM1596.64 1320.2h2.1v-179.52h-2.1zM1597.76 1320.2h2.1v-157.08h-2.1zM1598.88 1320.2h2.1v-179.52h-2.1zM1600 1320.2h2.1v-157.08h-2.1zM1601.13 1320.2h2.1v-168.3h-2.1zM1602.25 1320.2h2.1v-168.3h-2.1zM1603.37 1320.2h2.1v-359.04h-2.1zM1604.49 1320.2h2.1v-168.3h-2.1zM1605.61 1320.2h2.1v-145.86h-2.1zM1606.73 1320.2h2.1v-157.08h-2.1zM1607.85 1320.2h2.1v-157.08h-2.1zM1608.97 1320.2h2.1v-123.42h-2.1zM1610.09 1320.2h2.1v-157.08h-2.1zM1611.21 1320.2h2.1v-157.08h-2.1zM1612.33 1320.2h2.1v-134.64h-2.1zM1613.45 1320.2h2.1v-145.86h-2.1zM1614.58 1320.2h2.1v-134.64h-2.1zM1615.7 1320.2h2.1v-145.86h-2.1zM1616.82 1320.2h2.1v-145.86h-2.1zM1617.94 1320.2h2.1v-302.94h-2.1zM1619.06 1320.2h2.1v-291.72h-2.1zM1620.18 1320.2h2.1v-392.7h-2.1zM1621.3 1320.2h2.1v-415.14h-2.1zM1622.42 1320.2h2.1v-291.72h-2.1zM1623.54 1320.2h2.1v-336.6h-2.1zM1624.66 1320.2h2.1v-314.16h-2.1zM1625.78 1320.2h2.1v-258.06h-2.1zM1626.9 1320.2h2.1v-179.52h-2.1zM1628.03 1320.2h2.1v-145.86h-2.1zM1629.15 1320.2h2.1v-168.3h-2.1zM1630.27 1320.2h2.1v-325.38h-2.1zM1631.39 1320.2h2.1v-157.08h-2.1zM1632.51 1320.2h2.1v-168.3h-2.1zM1633.63 1320.2h2.1v-336.6h-2.1zM1634.75 1320.2h2.1v-224.4h-2.1zM1635.87 1320.2h2.1v-235.62h-2.1zM1636.99 1320.2h2.1v-392.7h-2.1zM1638.11 1320.2h2.1v-213.18h-2.1zM1639.23 1320.2h2.1v-258.06h-2.1zM1640.35 1320.2h2.1v-157.08h-2.1zM1641.48 1320.2h2.1v-157.08h-2.1zM1642.6 1320.2h2.1v-403.92h-2.1zM1643.72 1320.2h2.1v-370.26h-2.1zM1644.84 1320.2h2.1v-201.96h-2.1zM1645.96 1320.2h2.1v-201.96h-2.1zM1647.08 1320.2h2.1v-179.52h-2.1zM1648.2 1320.2h2.1v-179.52h-2.1zM1649.32 1320.2h2.1v-190.74h-2.1zM1650.44 1320.2h2.1v-448.8h-2.1zM1651.56 1320.2h2.1v-201.96h-2.1zM1652.68 1320.2h2.1v-224.4h-2.1zM1653.8 1320.2h2.1v-201.96h-2.1zM1654.92 1320.2h2.1v-201.96h-2.1zM1656.05 1320.2h2.1v-157.08h-2.1zM1657.17 1320.2h2.1v-157.08h-2.1zM1658.29 1320.2h2.1v-179.52h-2.1zM1659.41 1320.2h2.1v-157.08h-2.1zM1660.53 1320.2h2.1v-190.74h-2.1zM1661.65 1320.2h2.1v-157.08h-2.1zM1662.77 1320.2h2.1v-157.08h-2.1zM1663.89 1320.2h2.1v-157.08h-2.1zM1665.01 1320.2h2.1v-145.86h-2.1zM1666.13 1320.2h2.1v-224.4h-2.1zM1667.25 1320.2h2.1v-168.3h-2.1zM1668.38 1320.2h2.1v-179.52h-2.1zM1669.5 1320.2h2.1v-145.86h-2.1zM1670.62 1320.2h2.1v-157.08h-2.1zM1671.74 1320.2h2.1v-168.3h-2.1zM1672.86 1320.2h2.1v-145.86h-2.1zM1673.98 1320.2h2.1v-145.86h-2.1zM1849.95 1320.2h2.1v-33.66h-2.1zM1851.07 1320.2h2.1v-33.66h-2.1zM1852.19 1320.2h2.1v-33.66h-2.1zM1853.31 1320.2h2.1v-33.66h-2.1zM1854.43 1320.2h2.1v-33.66h-2.1zM1855.55 1320.2h2.1v-33.66h-2.1zM1856.67 1320.2h2.1v-33.66h-2.1zM1857.8 1320.2h2.1v-33.66h-2.1zM1858.92 1320.2h2.1v-33.66h-2.1zM1860.04 1320.2h2.1v-33.66h-2.1zM1861.16 1320.2h2.1v-33.66h-2.1zM1862.28 1320.2h2.1v-33.66h-2.1zM1863.4 1320.2h2.1v-33.66h-2.1zM1864.52 1320.2h2.1v-157.08h-2.1zM1865.64 1320.2h2.1v-145.86h-2.1zM1866.76 1320.2h2.1v-145.86h-2.1zM1867.88 1320.2h2.1v-280.5h-2.1zM1869 1320.2h2.1v-415.14h-2.1zM1870.12 1320.2h2.1v-291.72h-2.1zM1871.25 1320.2h2.1v-190.74h-2.1zM1872.37 1320.2h2.1v-201.96h-2.1zM1873.49 1320.2h2.1v-190.74h-2.1zM1874.61 1320.2h2.1v-235.62h-2.1zM1875.73 1320.2h2.1v-280.5h-2.1zM1876.85 1320.2h2.1v-448.8h-2.1zM1877.97 1320.2h2.1v-460.02h-2.1zM1879.09 1320.2h2.1v-403.92h-2.1zM1880.21 1320.2h2.1v-415.14h-2.1zM1881.33 1320.2h2.1v-403.92h-2.1zM1882.45 1320.2h2.1v-437.58h-2.1zM1883.58 1320.2h2.1v-448.8h-2.1zM1884.7 1320.2h2.1v-448.8h-2.1zM1885.82 1320.2h2.1v-448.8h-2.1zM1886.94 1320.2h2.1v-381.48h-2.1zM1888.06 1320.2h2.1v-403.92h-2.1zM1889.18 1320.2h2.1v-224.4h-2.1zM1890.3 1320.2h2.1v-235.62h-2.1zM1891.42 1320.2h2.1v-157.08h-2.1zM1892.54 1320.2h2.1v-157.08h-2.1zM1893.66 1320.2h2.1v-157.08h-2.1zM1894.78 1320.2h2.1v-168.3h-2.1zM1895.9 1320.2h2.1v-280.5h-2.1zM1897.02 1320.2h2.1v-157.08h-2.1zM1898.15 1320.2h2.1v-291.72h-2.1zM1899.27 1320.2h2.1v-269.28h-2.1zM1900.39 1320.2h2.1v-157.08h-2.1zM1901.51 1320.2h2.1v-145.86h-2.1zM1902.63 1320.2h2.1v-291.72h-2.1zM1903.75 1320.2h2.1v-168.3h-2.1zM1904.87 1320.2h2.1v-448.8h-2.1zM1905.99 1320.2h2.1v-415.14h-2.1zM1907.11 1320.2h2.1v-145.86h-2.1zM1908.23 1320.2h2.1v-426.36h-2.1zM1909.35 1320.2h2.1v-134.64h-2.1zM1910.48 1320.2h2.1v-157.08h-2.1zM1911.6 1320.2h2.1v-168.3h-2.1zM1912.72 1320.2h2.1v-190.74h-2.1zM1913.84 1320.2h2.1v-179.52h-2.1zM1914.96 1320.2h2.1v-213.18h-2.1zM1916.08 1320.2h2.1v-168.3h-2.1zM1917.2 1320.2h2.1v-448.8h-2.1zM1918.32 1320.2h2.1v-224.4h-2.1zM1919.44 1320.2h2.1v-437.58h-2.1zM1920.56 1320.2h2.1v-347.82h-2.1zM1921.68 1320.2h2.1v-179.52h-2.1zM1922.8 1320.2h2.1v-190.74h-2.1zM1923.93 1320.2h2.1v-213.18h-2.1zM1925.05 1320.2h2.1v-201.96h-2.1zM1926.17 1320.2h2.1v-224.4h-2.1zM1927.29 1320.2h2.1v-403.92h-2.1zM1928.41 1320.2h2.1v-224.4h-2.1zM1929.53 1320.2h2.1v-403.92h-2.1zM1930.65 1320.2h2.1v-190.74h-2.1zM1931.77 1320.2h2.1v-224.4h-2.1zM1932.89 1320.2h2.1v-258.06h-2.1zM1934.01 1320.2h2.1v-190.74h-2.1zM1935.13 1320.2h2.1v-190.74h-2.1zM1936.25 1320.2h2.1v-145.86h-2.1zM1937.38 1320.2h2.1v-123.42h-2.1zM1938.5 1320.2h2.1v-123.42h-2.1zM1939.62 1320.2h2.1v-269.28h-2.1zM1940.74 1320.2h2.1v-448.8h-2.1zM1941.86 1320.2h2.1v-280.5h-2.1zM1942.98 1320.2h2.1v-314.16h-2.1zM1944.1 1320.2h2.1v-403.92h-2.1zM1945.22 1320.2h2.1v-280.5h-2.1zM1946.34 1320.2h2.1v-269.28h-2.1zM1947.46 1320.2h2.1v-269.28h-2.1zM1948.58 1320.2h2.1v-415.14h-2.1zM1949.7 1320.2h2.1v-302.94h-2.1zM1950.83 1320.2h2.1v-359.04h-2.1zM1951.95 1320.2h2.1v-134.64h-2.1zM1953.07 1320.2h2.1v-157.08h-2.1zM1954.19 1320.2h2.1v-168.3h-2.1zM1955.31 1320.2h2.1v-157.08h-2.1zM1956.43 1320.2h2.1v-157.08h-2.1zM1957.55 1320.2h2.1v-415.14h-2.1zM1958.67 1320.2h2.1v-134.64h-2.1zM1959.79 1320.2h2.1v-157.08h-2.1zM1960.91 1320.2h2.1v-403.92h-2.1zM1962.03 1320.2h2.1v-168.3h-2.1zM1963.15 1320.2h2.1v-157.08h-2.1zM1964.28 1320.2h2.1v-157.08h-2.1zM1965.4 1320.2h2.1v-157.08h-2.1zM1966.52 1320.2h2.1v-157.08h-2.1zM1967.64 1320.2h2.1v-392.7h-2.1zM1968.76 1320.2h2.1v-179.52h-2.1zM1969.88 1320.2h2.1v-448.8h-2.1zM1971 1320.2h2.1v-370.26h-2.1zM1972.12 1320.2h2.1v-145.86h-2.1zM1973.24 1320.2h2.1v-145.86h-2.1zM1974.36 1320.2h2.1v-168.3h-2.1zM1975.48 1320.2h2.1v-157.08h-2.1zM1976.6 1320.2h2.1v-190.74h-2.1zM1977.72 1320.2h2.1v-201.96h-2.1zM1978.85 1320.2h2.1v-235.62h-2.1zM1979.97 1320.2h2.1v-224.4h-2.1zM1981.09 1320.2h2.1v-201.96h-2.1zM1982.21 1320.2h2.1v-235.62h-2.1zM1983.33 1320.2h2.1v-201.96h-2.1zM1984.45 1320.2h2.1v-201.96h-2.1zM1985.57 1320.2h2.1v-235.62h-2.1zM1986.69 1320.2h2.1v-269.28h-2.1zM1987.81 1320.2h2.1v-302.94h-2.1zM1988.93 1320.2h2.1v-201.96h-2.1zM1990.05 1320.2h2.1v-246.84h-2.1zM1991.17 1320.2h2.1v-213.18h-2.1zM1992.3 1320.2h2.1v-235.62h-2.1zM1993.42 1320.2h2.1v-201.96h-2.1zM1994.54 1320.2h2.1v-201.96h-2.1zM1995.66 1320.2h2.1v-224.4h-2.1zM1996.78 1320.2h2.1v-157.08h-2.1zM2172.75 1320.2h2.1v-11.22h-2.1zM2173.87 1320.2h2.1v-22.44h-2.1zM2174.99 1320.2h2.1v-11.22h-2.1zM2176.11 1320.2h2.1v-22.44h-2.1zM2177.23 1320.2h2.1v-22.44h-2.1zM2178.35 1320.2h2.1v-33.66h-2.1zM2179.47 1320.2h2.1v-22.44h-2.1zM2180.6 1320.2h2.1v-22.44h-2.1zM2181.72 1320.2h2.1v-134.64h-2.1zM2182.84 1320.2h2.1v-258.06h-2.1zM2183.96 1320.2h2.1v-246.84h-2.1zM2185.08 1320.2h2.1v-314.16h-2.1zM2186.2 1320.2h2.1v-392.7h-2.1zM2187.32 1320.2h2.1v-213.18h-2.1zM2188.44 1320.2h2.1v-370.26h-2.1zM2189.56 1320.2h2.1v-460.02h-2.1zM2190.68 1320.2h2.1v-437.58h-2.1zM2191.8 1320.2h2.1v-448.8h-2.1zM2192.93 1320.2h2.1v-415.14h-2.1zM2194.05 1320.2h2.1v-190.74h-2.1zM2195.17 1320.2h2.1v-201.96h-2.1zM2196.29 1320.2h2.1v-381.48h-2.1zM2197.41 1320.2h2.1v-437.58h-2.1zM2198.53 1320.2h2.1v-448.8h-2.1zM2199.65 1320.2h2.1v-347.82h-2.1zM2200.77 1320.2h2.1v-437.58h-2.1zM2201.89 1320.2h2.1v-437.58h-2.1zM2203.01 1320.2h2.1v-325.38h-2.1zM2204.13 1320.2h2.1v-381.48h-2.1zM2205.25 1320.2h2.1v-437.58h-2.1zM2206.38 1320.2h2.1v-403.92h-2.1zM2207.5 1320.2h2.1v-258.06h-2.1zM2208.62 1320.2h2.1v-437.58h-2.1zM2209.74 1320.2h2.1v-426.36h-2.1zM2210.86 1320.2h2.1v-426.36h-2.1zM2211.98 1320.2h2.1v-347.82h-2.1zM2213.1 1320.2h2.1v-437.58h-2.1zM2214.22 1320.2h2.1v-448.8h-2.1zM2215.34 1320.2h2.1v-426.36h-2.1zM2216.46 1320.2h2.1v-437.58h-2.1zM2217.58 1320.2h2.1v-460.02h-2.1zM2218.7 1320.2h2.1v-426.36h-2.1zM2219.82 1320.2h2.1v-448.8h-2.1zM2220.95 1320.2h2.1v-415.14h-2.1zM2222.07 1320.2h2.1v-403.92h-2.1zM2223.19 1320.2h2.1v-415.14h-2.1zM2224.31 1320.2h2.1v-437.58h-2.1zM2225.43 1320.2h2.1v-392.7h-2.1zM2226.55 1320.2h2.1v-392.7h-2.1zM2227.67 1320.2h2.1v-426.36h-2.1zM2228.79 1320.2h2.1v-359.04h-2.1zM2229.91 1320.2h2.1v-347.82h-2.1zM2231.03 1320.2h2.1v-392.7h-2.1zM2232.15 1320.2h2.1v-403.92h-2.1zM2233.28 1320.2h2.1v-437.58h-2.1zM2234.4 1320.2h2.1v-392.7h-2.1zM2235.52 1320.2h2.1v-392.7h-2.1zM2236.64 1320.2h2.1v-392.7h-2.1zM2237.76 1320.2h2.1v-448.8h-2.1zM2238.88 1320.2h2.1v-381.48h-2.1zM2240 1320.2h2.1v-415.14h-2.1zM2241.12 1320.2h2.1v-392.7h-2.1zM2242.24 1320.2h2.1v-437.58h-2.1zM2243.36 1320.2h2.1v-359.04h-2.1zM2244.48 1320.2h2.1v-392.7h-2.1zM2245.6 1320.2h2.1v-381.48h-2.1zM2246.73 1320.2h2.1v-302.94h-2.1zM2247.85 1320.2h2.1v-426.36h-2.1zM2248.97 1320.2h2.1v-403.92h-2.1zM2250.09 1320.2h2.1v-359.04h-2.1zM2251.21 1320.2h2.1v-157.08h-2.1zM2252.33 1320.2h2.1v-224.4h-2.1zM2253.45 1320.2h2.1v-370.26h-2.1zM2254.57 1320.2h2.1v-403.92h-2.1zM2255.69 1320.2h2.1v-370.26h-2.1zM2256.81 1320.2h2.1v-224.4h-2.1zM2257.93 1320.2h2.1v-235.62h-2.1zM2259.05 1320.2h2.1v-201.96h-2.1zM2260.18 1320.2h2.1v-224.4h-2.1zM2261.3 1320.2h2.1v-302.94h-2.1zM2262.42 1320.2h2.1v-314.16h-2.1zM2263.54 1320.2h2.1v-179.52h-2.1zM2264.66 1320.2h2.1v-157.08h-2.1zM2265.78 1320.2h2.1v-123.42h-2.1zM2266.9 1320.2h2.1v-201.96h-2.1zM2268.02 1320.2h2.1v-280.5h-2.1zM2269.14 1320.2h2.1v-314.16h-2.1zM2270.26 1320.2h2.1v-392.7h-2.1zM2271.38 1320.2h2.1v-426.36h-2.1zM2272.5 1320.2h2.1v-291.72h-2.1zM2273.62 1320.2h2.1v-123.42h-2.1zM2274.75 1320.2h2.1v-157.08h-2.1zM2275.87 1320.2h2.1v-168.3h-2.1zM2276.99 1320.2h2.1v-381.48h-2.1zM2278.11 1320.2h2.1v-493.68h-2.1zM2279.23 1320.2h2.1v-403.92h-2.1zM2280.35 1320.2h2.1v-157.08h-2.1zM2281.47 1320.2h2.1v-145.86h-2.1zM2282.59 1320.2h2.1v-179.52h-2.1zM2283.71 1320.2h2.1v-145.86h-2.1zM2284.83 1320.2h2.1v-179.52h-2.1zM2285.95 1320.2h2.1v-134.64h-2.1zM2287.08 1320.2h2.1v-134.64h-2.1zM2288.2 1320.2h2.1v-157.08h-2.1zM2289.32 1320.2h2.1v-112.2h-2.1zM2290.44 1320.2h2.1v-269.28h-2.1zM2291.56 1320.2h2.1v-392.7h-2.1zM2292.68 1320.2h2.1v-392.7h-2.1zM2293.8 1320.2h2.1v-336.6h-2.1zM2294.92 1320.2h2.1v-179.52h-2.1zM2296.04 1320.2h2.1v-213.18h-2.1zM2297.16 1320.2h2.1v-179.52h-2.1zM2298.28 1320.2h2.1v-213.18h-2.1zM2299.4 1320.2h2.1v-179.52h-2.1zM2300.53 1320.2h2.1v-190.74h-2.1zM2301.65 1320.2h2.1v-190.74h-2.1zM2302.77 1320.2h2.1v-145.86h-2.1zM2303.89 1320.2h2.1v-157.08h-2.1zM2305.01 1320.2h2.1v-145.86h-2.1zM2306.13 1320.2h2.1v-123.42h-2.1zM2307.25 1320.2h2.1v-145.86h-2.1zM2308.37 1320.2h2.1v-145.86h-2.1zM2309.49 1320.2h2.1v-123.42h-2.1zM2310.61 1320.2h2.1v-112.2h-2.1zM2311.73 1320.2h2.1v-112.2h-2.1zM2312.85 1320.2h2.1v-112.2h-2.1zM2313.97 1320.2h2.1v-112.2h-2.1zM2315.1 1320.2h2.1v-112.2h-2.1zM2316.22 1320.2h2.1v-123.42h-2.1zM2317.34 1320.2h2.1v-112.2h-2.1zM2318.46 1320.2h2.1v-134.64h-2.1zM2319.58 1320.2h2.1v-145.86h-2.1z" fill="#228f70"/></g><rect x="153.9" y="815.3" width="1.8" height="505.9" fill="#666"/><rect x="154.8" y="1320" width="2261.5" height="2" fill="#6e6e6e"/><rect x="155.7" y="1321.2" width="1.2" height="10.5" fill="#a8a8a8"/><rect x="478.5" y="1321.2" width="1.2" height="10.5" fill="#a8a8a8"/><rect x="801.3" y="1321.2" width="1.2" height="10.5" fill="#a8a8a8"/><rect x="1124.1" y="1321.2" width="1.2" height="10.5" fill="#a8a8a8"/><rect x="1446.9" y="1321.2" width="1.2" height="10.5" fill="#a8a8a8"/><rect x="1769.7" y="1321.2" width="1.2" height="10.5" fill="#a8a8a8"/><rect x="2092.5" y="1321.2" width="1.2" height="10.5" fill="#a8a8a8"/><text transform="translate(132.4 1326) scale(1.07 1)" text-anchor="end" font-size="19.8" fill="#333" stroke="#333" stroke-width="0.25">0</text><text transform="translate(132.4 1269.9) scale(1.07 1)" text-anchor="end" font-size="19.8" fill="#333" stroke="#333" stroke-width="0.25">5</text><text transform="translate(132.4 1213.8) scale(1.07 1)" text-anchor="end" font-size="19.8" fill="#333" stroke="#333" stroke-width="0.25">10</text><text transform="translate(132.4 1157.7) scale(1.07 1)" text-anchor="end" font-size="19.8" fill="#333" stroke="#333" stroke-width="0.25">15</text><text transform="translate(132.4 1101.6) scale(1.07 1)" text-anchor="end" font-size="19.8" fill="#333" stroke="#333" stroke-width="0.25">20</text><text transform="translate(132.4 1045.5) scale(1.07 1)" text-anchor="end" font-size="19.8" fill="#333" stroke="#333" stroke-width="0.25">25</text><text transform="translate(132.4 989.4) scale(1.07 1)" text-anchor="end" font-size="19.8" fill="#333" stroke="#333" stroke-width="0.25">30</text><text transform="translate(132.4 933.3) scale(1.07 1)" text-anchor="end" font-size="19.8" fill="#333" stroke="#333" stroke-width="0.25">35</text><text transform="translate(132.4 877.2) scale(1.07 1)" text-anchor="end" font-size="19.8" fill="#333" stroke="#333" stroke-width="0.25">40</text><text transform="translate(132.4 821.1) scale(1.07 1)" text-anchor="end" font-size="19.8" fill="#333" stroke="#333" stroke-width="0.25">45</text><text transform="translate(86.5 1068) rotate(-90) scale(1 1.12)" text-anchor="middle" font-size="21" fill="#333" stroke="#333" stroke-width="0.2">kW</text><text x="156.7" y="1357.6" text-anchor="middle" font-size="21.5" fill="#000" letter-spacing="0.65">ven. 10</text><text x="479.5" y="1357.6" text-anchor="middle" font-size="21.5" fill="#000" letter-spacing="0.65">sam. 11</text><text x="802.3" y="1357.6" text-anchor="middle" font-size="21.5" fill="#000" letter-spacing="0.65">dim. 12</text><text x="1125.1" y="1357.6" text-anchor="middle" font-size="21.5" fill="#000" letter-spacing="0.65">lun. 13</text><text x="1447.9" y="1357.6" text-anchor="middle" font-size="21.5" fill="#000" letter-spacing="0.65">mar. 14</text><text x="1770.7" y="1357.6" text-anchor="middle" font-size="21.5" fill="#000" letter-spacing="0.65">mer. 15</text><text x="2093.5" y="1357.6" text-anchor="middle" font-size="21.5" fill="#000" letter-spacing="0.65">jeu. 16</text><rect x="562" y="806.3" width="411.5" height="57.2" rx="9.5" fill="#fff" stroke="#7c7c7c" stroke-width="3.2"/><text x="778.5" y="844.8" text-anchor="middle" font-size="28" fill="#000" stroke="#000" stroke-width="0.2" xml:space="preserve">Consommation: 1 259 kWh</text><rect x="1100.8" y="806.8" width="410.3" height="56.3" rx="9.5" fill="#fff" stroke="#7c7c7c" stroke-width="3.2"/><text x="1315.6" y="846" text-anchor="middle" font-size="28.5" fill="#000" stroke="#000" stroke-width="0.2" xml:space="preserve">P Max :  44 kW</text><rect x="1610.7" y="806.8" width="410.3" height="56.3" rx="9.5" fill="#fff" stroke="#7c7c7c" stroke-width="3.2"/><text x="1825.8" y="846" text-anchor="middle" font-size="28.5" fill="#000" stroke="#000" stroke-width="0.2" xml:space="preserve">P min : 0 kW</text><rect x="2322" y="1322" width="115.6" height="57.5" fill="#fff"/><path d="M2362 1344.5 C2359.5 1338.5 2355 1335.8 2349.2 1335.8 C2341.5 1335.8 2336.8 1342 2336.8 1348.6 C2336.8 1356 2342.5 1361 2349.3 1361 C2356.2 1361 2361.2 1356.2 2361.3 1350.2 H2350" fill="none" stroke="#0a6eb8" stroke-width="5" stroke-linecap="round"/><path d="M2369.6 1350.3 C2366.2 1346.8 2367 1340 2375.7 1340 C2382.6 1340 2385 1345 2383 1349.6 C2381.5 1353 2376.5 1356.5 2370.5 1361.5" fill="none" stroke="#0a6eb8" stroke-width="5.2"/><circle cx="2369.9" cy="1350" r="2.6" fill="#0a6eb8"/><path d="M2367.6 1363.3 L2372.5 1358 H2385.7 V1363.3 Z" fill="#0a6eb8"/><path d="M2391.9 1324.8 L2383.6 1338.2 L2392.6 1340.1 L2389.1 1362.8 L2399.8 1338.4 L2391.7 1335.5 Z" fill="#e85a20"/><g fill="#f0901c"><path d="M2403.2 1338.9 H2424.2 L2418.4 1344.9 H2400.8 Z"/><path d="M2399.3 1348 H2418 L2412.7 1354 H2396.9 Z"/><path d="M2396.5 1357 H2416.5 L2411.3 1363.3 H2393.1 Z"/></g><text x="2408.7" y="1334.6" text-anchor="middle" font-size="6.8" font-weight="bold" fill="#e85a20" letter-spacing="0.35">FRANCE</text><rect x="2339.6" y="1365.6" width="74" height="1.8" fill="#0a6eb8" opacity="0.4"/></svg></body></html>
